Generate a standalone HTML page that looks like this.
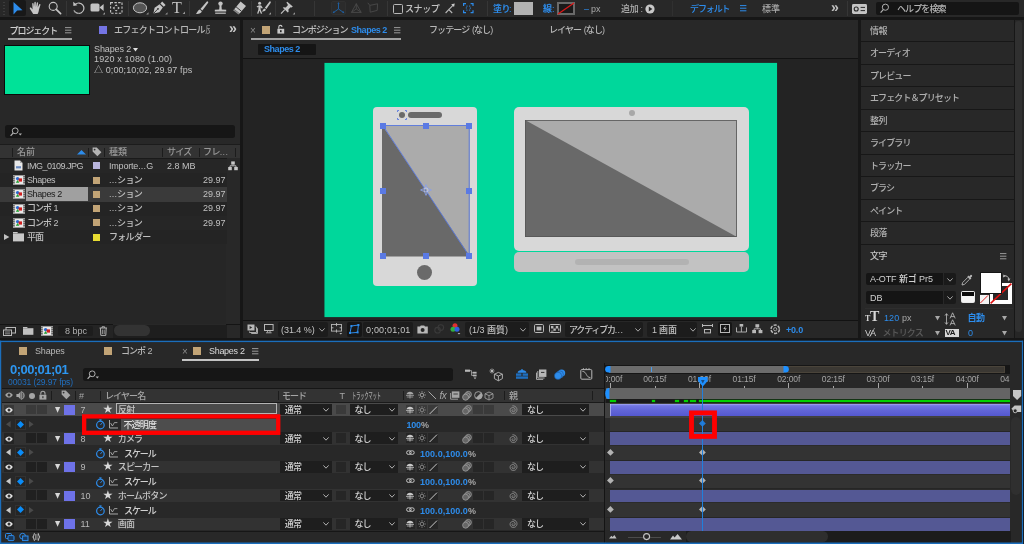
<!DOCTYPE html><html lang="ja"><head><meta charset="utf-8"><title>After Effects</title><style>
*{margin:0;padding:0;box-sizing:border-box}
html,body{width:1024px;height:544px;overflow:hidden;background:#161616}
body{position:relative;will-change:transform;font-family:"Liberation Sans","Noto Sans CJK JP",sans-serif;font-size:9px;font-weight:500;color:#b4b4b4;line-height:12px}
.a{position:absolute}
.t{position:absolute;white-space:nowrap;line-height:12px;height:12px}
.bl{color:#2d8ceb}
svg{position:absolute;overflow:visible}
</style></head><body>
<div class="a" style="left:0px;top:0px;width:1024px;height:17px;background:#282828;"></div>
<div class="a" style="left:3px;top:2px;width:2px;height:1px;background:#3c3c3c;"></div>
<div class="a" style="left:3px;top:5px;width:2px;height:1px;background:#3c3c3c;"></div>
<div class="a" style="left:3px;top:8px;width:2px;height:1px;background:#3c3c3c;"></div>
<div class="a" style="left:3px;top:11px;width:2px;height:1px;background:#3c3c3c;"></div>
<div class="a" style="left:3px;top:14px;width:2px;height:1px;background:#3c3c3c;"></div>
<div class="a" style="left:9px;top:0px;width:17px;height:16px;background:#181818;border-radius:2px;"></div>
<svg style="left:13px;top:2px" width="10" height="13" viewBox="0 0 10 13"><path d="M0.5 0 L9.5 8.2 L4.2 8.6 L0.5 12.5 Z" fill="#2d8ceb"/></svg>
<svg style="left:29px;top:1px" width="14" height="14" viewBox="0 0 14 14"><path d="M4.2 13 C3 11 1.5 9 0.8 7.6 C0.5 6.6 1.6 6.2 2.4 7 L3.6 8.4 L3.2 2.8 C3.2 1.8 4.5 1.8 4.6 2.8 L5 6 L5.4 1.4 C5.5 0.4 6.8 0.4 6.8 1.4 L6.9 6 L7.8 1.8 C8 0.9 9.2 1.1 9.1 2.1 L8.7 6.4 L10.2 3.4 C10.7 2.6 11.7 3.1 11.4 4 L10 8.6 C9.8 10.6 9.4 11.8 8.6 13 Z" fill="#c4c4c4"/></svg>
<svg style="left:48px;top:1px" width="14" height="14" viewBox="0 0 14 14"><circle cx="5.2" cy="5.4" r="4" fill="none" stroke="#c4c4c4" stroke-width="1.1"/><path d="M8.2 8.4 L12.6 12.6" stroke="#c4c4c4" stroke-width="1.7" stroke-linecap="round"/></svg>
<div class="a" style="left:66px;top:1px;width:1px;height:15px;background:#363636;"></div>
<svg style="left:72px;top:1px" width="14" height="14" viewBox="0 0 14 14"><path d="M3.2 3.4 A5.2 5.2 0 1 1 2 9.4" fill="none" stroke="#c4c4c4" stroke-width="1.2"/><path d="M1.2 0.8 L1.4 5 L5.4 4.2 Z" fill="#c4c4c4"/><path d="M2 9.4 A5.2 5.2 0 0 0 7 12.6" fill="none" stroke="#777" stroke-width="1" stroke-dasharray="1.2 1.2"/></svg>
<svg style="left:90px;top:2px" width="16" height="13" viewBox="0 0 16 13"><rect x="0.5" y="1.5" width="9" height="8" rx="1.6" fill="#c4c4c4"/><path d="M9.5 5.5 L13.6 2 L13.6 9 Z" fill="#c4c4c4"/><path d="M15 12.5 L15 10.2 L12.7 12.5 Z" fill="#999"/></svg>
<svg style="left:110px;top:2px" width="13" height="12" viewBox="0 0 13 12"><rect x="0.6" y="0.6" width="11.4" height="10.6" fill="none" stroke="#c4c4c4" stroke-width="1.1" stroke-dasharray="2.4 1.4"/><path d="M2.5 6 L4.6 4.4 L4.6 7.6 Z M9.9 6 L7.8 4.4 L7.8 7.6 Z M6.2 2.3 L4.8 4 L7.6 4 Z M6.2 9.6 L4.8 8 L7.6 8 Z" fill="#c4c4c4"/></svg>
<div class="a" style="left:128px;top:1px;width:1px;height:15px;background:#363636;"></div>
<svg style="left:133px;top:2px" width="16" height="13" viewBox="0 0 16 13"><ellipse cx="7" cy="5.8" rx="6.6" ry="5" fill="#555" stroke="#c4c4c4" stroke-width="1"/><path d="M15.5 12.5 L15.5 10.2 L13.2 12.5 Z" fill="#999"/></svg>
<svg style="left:152px;top:1px" width="16" height="14" viewBox="0 0 16 14"><path d="M1.4 12.6 L2.6 6.8 L7.6 3.2 L10.8 6.4 L7.4 11.2 Z" fill="#c4c4c4"/><path d="M8.4 2.4 L10.2 0.6 L13.6 4 L11.8 5.8 Z" fill="#c4c4c4"/><path d="M1.4 12.6 L5.6 8.2" stroke="#282828" stroke-width="0.9"/><circle cx="6" cy="7.8" r="0.9" fill="#282828"/><path d="M15.5 13.5 L15.5 11.2 L13.2 13.5 Z" fill="#999"/></svg>
<div class="t " style="left:172px;top:-1px;font-family:'Liberation Serif',serif;font-size:16px;line-height:17px;height:17px;color:#c4c4c4">T</div>
<svg style="left:182px;top:11px" width="3" height="3" viewBox="0 0 3 3"><path d="M3 3 L3 0.6 L0.6 3 Z" fill="#999"/></svg>
<div class="a" style="left:189px;top:1px;width:1px;height:15px;background:#363636;"></div>
<svg style="left:195px;top:1px" width="14" height="14" viewBox="0 0 14 14"><path d="M12.6 0.4 C13.4 0.6 13.4 1.4 13 2 L7.4 9.6 L5.4 8 L11.4 0.9 C11.8 0.5 12.2 0.3 12.6 0.4 Z" fill="#c4c4c4"/><path d="M4.8 8.6 L6.8 10.2 C6.4 12.2 3.6 13.2 0.8 12.8 C2.4 11.8 2.6 9.4 4.8 8.6 Z" fill="#c4c4c4"/></svg>
<svg style="left:214px;top:1px" width="14" height="14" viewBox="0 0 14 14"><circle cx="6.5" cy="2.6" r="2.2" fill="#c4c4c4"/><path d="M5.6 4 L7.4 4 L7.8 8.4 L12.2 8.8 L12.2 10.6 L0.8 10.6 L0.8 8.8 L5.2 8.4 Z" fill="#c4c4c4"/><rect x="1.2" y="11.6" width="10.6" height="1.2" fill="#c4c4c4"/></svg>
<svg style="left:232px;top:1px" width="15" height="14" viewBox="0 0 15 14"><path d="M8.6 0.6 L14 5 L7.6 12.6 L2.2 8.2 Z" fill="#c4c4c4"/><path d="M2.2 8.2 L7.6 12.6 L6.4 13.6 L1 9.2 Z" fill="#8a8a8a"/><path d="M4.1 5.9 L9.5 10.3" stroke="#282828" stroke-width="0.9"/></svg>
<div class="a" style="left:251px;top:1px;width:1px;height:15px;background:#363636;"></div>
<svg style="left:256px;top:1px" width="16" height="14" viewBox="0 0 16 14"><circle cx="3.6" cy="2.2" r="1.5" fill="#c4c4c4"/><path d="M0.6 5.6 L3 4.2 L5.2 4.6 L6.8 7 L5.8 7.6 L4.6 6.2 L4.6 8.6 L6.2 12.6 L4.9 12.8 L3.4 9.6 L2.4 12.8 L1.1 12.6 L2.4 8.4 L2.4 5.8 L1.2 6.6 Z" fill="#c4c4c4"/><path d="M14.4 0.4 C15 0.7 14.9 1.4 14.6 1.9 L10.4 8 L8.8 6.8 L13.4 0.8 C13.7 0.4 14.1 0.3 14.4 0.4 Z" fill="#c4c4c4"/><path d="M8.3 7.4 L9.9 8.6 C9.6 10.2 7.6 10.8 5.8 10.4 C7 9.8 7 8 8.3 7.4 Z" fill="#c4c4c4"/><path d="M15 13.5 L15 11.2 L12.7 13.5 Z" fill="#999"/></svg>
<div class="a" style="left:275px;top:1px;width:1px;height:15px;background:#363636;"></div>
<svg style="left:280px;top:1px" width="16" height="14" viewBox="0 0 16 14"><path d="M7.2 0.8 L12.8 5.6 L11.6 6.6 L10.6 6.2 L8.4 8.6 L8.6 10.8 L7.8 11.4 L2.8 6.8 L3.6 6.2 L5.8 6.4 L8 4 L6.4 1.6 Z" fill="#c4c4c4"/><path d="M4.8 8.6 L1 12.6" stroke="#c4c4c4" stroke-width="1.1"/><path d="M15 13.5 L15 11.2 L12.7 13.5 Z" fill="#999"/></svg>
<div class="a" style="left:314px;top:1px;width:1px;height:15px;background:#363636;"></div>
<div class="a" style="left:331px;top:1px;width:15px;height:14px;background:#2b2b2b;border:1px solid #303030;border-radius:2px;"></div>
<svg style="left:332px;top:2px" width="13" height="12" viewBox="0 0 13 12"><path d="M6.5 1.4 L6.5 7 L1.6 10.4 M6.5 7 L11.4 10.4" fill="none" stroke="#1f5e9e" stroke-width="1"/><path d="M6.5 0 L5.4 2 L7.6 2 Z M0.6 11.2 L2.8 10.8 L1.6 9 Z M12.4 11.2 L10.2 10.8 L11.4 9 Z" fill="#1f5e9e"/></svg>
<svg style="left:350px;top:2px" width="13" height="12" viewBox="0 0 13 12"><path d="M6.3 1.4 L6.3 7 L1.4 10.4 M6.3 7 L11.2 10.4 M6.3 1.8 L1.4 10.4 L11.2 10.4 Z" fill="none" stroke="#4a4a4a" stroke-width="0.9"/></svg>
<svg style="left:367px;top:2px" width="13" height="12" viewBox="0 0 13 12"><path d="M2.8 3.4 L10.6 1.8 L10.2 8.4 L3.2 10.2 Z M0.8 0.8 L2.8 3.4" fill="none" stroke="#4a4a4a" stroke-width="0.9"/></svg>
<div class="a" style="left:387px;top:1px;width:1px;height:15px;background:#363636;"></div>
<div class="a" style="left:393px;top:4px;width:10px;height:10px;background:transparent;border:1px solid #b8b8b8;border-radius:1.5px;"></div>
<div class="t " style="left:405px;top:3px;color:#c2c2c2;letter-spacing:-0.4px">スナップ</div>
<svg style="left:445px;top:3px" width="10" height="11" viewBox="0 0 10 11"><path d="M0.6 10 L3.8 6.6 L7.2 10 M3.8 6.6 L8.4 1.8" fill="none" stroke="#b8b8b8" stroke-width="1.1"/><path d="M9.8 0.4 L6.2 1.2 L9 4 Z" fill="#c8c8c8"/></svg>
<svg style="left:463px;top:3px" width="11" height="11" viewBox="0 0 11 11"><path d="M0.6 3 V0.6 H3 M7.6 0.6 H10 V3 M10 7.2 V9.6 H7.6 M3 9.6 H0.6 V7.2" fill="none" stroke="#2d8ceb" stroke-width="1.2"/><rect x="3.3" y="3.1" width="4" height="4" fill="none" stroke="#2d8ceb" stroke-width="0.9" stroke-dasharray="1.3 1.4"/></svg>
<div class="a" style="left:487px;top:1px;width:1px;height:15px;background:#363636;"></div>
<div class="t bl" style="left:493px;top:3px;letter-spacing:-0.5px;font-weight:bold">塗り</div>
<div class="t bl" style="left:509px;top:3px;">:</div>
<div class="a" style="left:514px;top:2px;width:19px;height:13px;background:#b2b2b2;"></div>
<div class="t bl" style="left:543px;top:3px;font-weight:bold">線</div>
<div class="t bl" style="left:552px;top:3px;">:</div>
<div class="a" style="left:557px;top:2px;width:18px;height:13px;background:#6a6a6a;"><div class="a" style="left:2px;top:2px;width:14px;height:9px;background:#1a1a1a"></div></div>
<svg style="left:557px;top:2px" width="18" height="13" viewBox="0 0 18 13"><path d="M1 12 L17 1" stroke="#e01818" stroke-width="1.2"/></svg>
<div class="t bl" style="left:584px;top:3px;">–</div>
<div class="t " style="left:591px;top:3px;color:#a8a8a8">px</div>
<div class="t " style="left:621px;top:3px;color:#b0b0b0;letter-spacing:-0.3px">追加 :</div>
<svg style="left:645px;top:4px" width="10" height="10" viewBox="0 0 10 10"><circle cx="5" cy="5" r="4.6" fill="#c8c8c8"/><path d="M3.8 2.6 L7.4 5 L3.8 7.4 Z" fill="#282828"/></svg>
<div class="a" style="left:672px;top:1px;width:1px;height:15px;background:#303030;"></div>
<div class="t bl" style="left:690px;top:3px;letter-spacing:-1.1px">デフォルト</div>
<svg style="left:740px;top:5px" width="7" height="7" viewBox="0 0 7 7"><path d="M0 0.6 H6.4 M0 3.2 H6.4 M0 5.8 H6.4" stroke="#2d8ceb" stroke-width="1"/></svg>
<div class="t " style="left:762px;top:3px;color:#a8a8a8">標準</div>
<div class="t " style="left:831px;top:0px;font-size:14px;color:#c0c0c0;line-height:14px;height:14px;font-weight:bold;letter-spacing:-1px">»</div>
<div class="a" style="left:847px;top:1px;width:1px;height:15px;background:#363636;"></div>
<svg style="left:852px;top:4px" width="15" height="10" viewBox="0 0 15 10"><rect x="0" y="0" width="15" height="10" rx="1.4" fill="#c4c4c4"/><circle cx="4.2" cy="5" r="2" fill="none" stroke="#282828" stroke-width="1.1"/><path d="M8.6 3.4 H13 M8.6 6.6 H13" stroke="#282828" stroke-width="1"/></svg>
<div class="a" style="left:876px;top:2px;width:143px;height:13px;background:#151515;border-radius:2px;"></div>
<svg style="left:880px;top:3px" width="10" height="11" viewBox="0 0 10 11"><circle cx="5.4" cy="4.2" r="3.1" fill="none" stroke="#b0b0b0" stroke-width="1"/><path d="M3.2 6.6 L0.6 9.6" stroke="#b0b0b0" stroke-width="1.2"/></svg>
<div class="t " style="left:897px;top:3px;color:#b4b4b4;letter-spacing:-0.9px">ヘルプを検索</div>
<div class="a" style="left:0px;top:20px;width:240px;height:317.7px;background:#282828;"></div>
<div class="t " style="left:9.5px;top:24.5px;color:#d0d0d0;font-weight:500;letter-spacing:-1.05px">プロジェクト</div>
<svg style="left:65px;top:27px" width="7" height="7" viewBox="0 0 7 7"><path d="M0 0.6 H6.4 M0 3.2 H6.4 M0 5.8 H6.4" stroke="#9a9a9a" stroke-width="1"/></svg>
<div class="a" style="left:8px;top:38px;width:64px;height:2px;background:#a2a2a2;"></div>
<div class="a" style="left:99px;top:26px;width:8px;height:8px;background:#7474e4;"></div>
<div class="t " style="left:114px;top:24px;color:#b8b8b8;letter-spacing:-0.75px">エフェクトコントロール</div>
<div class="t " style="left:205px;top:24px;color:#8a8a8a;width:5px;overflow:hidden">反</div>
<div class="t " style="left:229px;top:21px;font-size:14px;color:#c8c8c8;line-height:14px;height:14px;font-weight:bold;letter-spacing:-1px">»</div>
<div class="a" style="left:4px;top:45px;width:86px;height:50px;background:#0a0a0a;"></div>
<div class="a" style="left:5px;top:46px;width:84px;height:48px;background:#00e298;"></div>
<div class="t " style="left:94px;top:43px;color:#c0c0c0;letter-spacing:-0.1px">Shapes 2</div>
<svg style="left:133px;top:47.5px" width="5" height="4" viewBox="0 0 5 4"><path d="M0 0 H5 L2.5 3.6 Z" fill="#e0e0e0"/></svg>
<div class="t " style="left:94px;top:53px;color:#c0c0c0;letter-spacing:0.15px">1920 x 1080 (1.00)</div>
<div class="t " style="left:94px;top:64px;color:#c0c0c0;letter-spacing:0.1px">△ 0;00;10;02, 29.97 fps</div>
<div class="a" style="left:5px;top:125px;width:229.5px;height:13.2px;background:#161616;border-radius:2.5px;"></div>
<svg style="left:10px;top:127px" width="13" height="10" viewBox="0 0 13 10"><circle cx="5.2" cy="3.8" r="2.9" fill="none" stroke="#b0b0b0" stroke-width="1"/><path d="M3.2 6 L0.6 8.8" stroke="#b0b0b0" stroke-width="1.2"/><path d="M8.6 6.6 H12 L10.3 8.6 Z" fill="#b0b0b0"/></svg>
<div class="a" style="left:227px;top:159px;width:13px;height:165px;background:#282828;"></div>
<div class="a" style="left:0px;top:144px;width:240px;height:1px;background:#1c1c1c;"></div>
<div class="a" style="left:0px;top:145px;width:240px;height:13px;background:#333333;"></div>
<div class="a" style="left:0px;top:158px;width:227px;height:1px;background:#1a1a1a;"></div>
<div class="a" style="left:12px;top:147.5px;width:1px;height:9px;background:#1c1c1c;"></div>
<div class="a" style="left:88px;top:147.5px;width:1px;height:9px;background:#1c1c1c;"></div>
<div class="a" style="left:104px;top:147.5px;width:1px;height:9px;background:#1c1c1c;"></div>
<div class="a" style="left:162px;top:147.5px;width:1px;height:9px;background:#1c1c1c;"></div>
<div class="a" style="left:198.5px;top:147.5px;width:1px;height:9px;background:#1c1c1c;"></div>
<div class="a" style="left:235.4px;top:147.5px;width:1px;height:9px;background:#1c1c1c;"></div>
<div class="t " style="left:17px;top:145.6px;color:#989898">名前</div>
<svg style="left:77px;top:149.6px" width="9" height="5" viewBox="0 0 9 5"><path d="M0 4.6 L4.5 0 L9 4.6 Z" fill="#2d8ceb"/></svg>
<svg style="left:92px;top:147.3px" width="10" height="10" viewBox="0 0 10 10"><path d="M0.6 0.6 H4.8 L9.4 5.2 L5.4 9.2 L0.6 4.6 Z" fill="#b4b4b4"/><circle cx="2.6" cy="2.6" r="0.9" fill="#333333"/></svg>
<div class="t " style="left:109px;top:145.6px;color:#989898">種類</div>
<div class="t " style="left:167px;top:145.6px;color:#989898;letter-spacing:-0.8px">サイズ</div>
<div class="t " style="left:203px;top:145.6px;color:#989898;letter-spacing:-0.6px">フレ<span style="letter-spacing:0.3px">...</span></div>
<div class="a" style="left:0px;top:158.75px;width:227px;height:14.25px;background:#262626;"></div>
<svg style="left:14px;top:160.25px" width="9" height="11" viewBox="0 0 9 11"><path d="M0.5 0.5 H6 L8.5 3 V10.5 H0.5 Z" fill="#e8e8e8"/><path d="M6 0.5 V3 H8.5" fill="#aaa"/><rect x="2" y="6.2" width="5" height="2.2" fill="#6a8ac0"/></svg>
<div class="t " style="left:27px;top:160px;color:#c0c0c0;letter-spacing:-0.5px">IMG_0109.JPG</div>
<div class="a" style="left:93px;top:162.25px;width:7px;height:7px;background:#b8b4dc;"></div>
<div class="t " style="left:109px;top:160px;color:#c0c0c0;letter-spacing:-0.2px">Importe<span style="letter-spacing:0.2px">...</span>G</div>
<div class="t " style="left:167px;top:160px;color:#c0c0c0">2.8 MB</div>
<svg style="left:228px;top:160.75px" width="10" height="10" viewBox="0 0 10 10"><rect x="3.2" y="0.4" width="3.6" height="3.2" fill="#c8c8c8"/><rect x="0.2" y="6" width="3.6" height="3.2" fill="#c8c8c8"/><rect x="6.2" y="6" width="3.6" height="3.2" fill="#c8c8c8"/><path d="M5 3.6 V4.8 M2 6 V4.8 H8 V6" fill="none" stroke="#c8c8c8" stroke-width="0.9"/></svg>
<div class="a" style="left:0px;top:173.0px;width:227px;height:14.25px;background:#242424;"></div>
<svg style="left:13px;top:175.0px" width="12" height="10" viewBox="0 0 12 10"><rect x="0" y="0" width="12" height="10" fill="#9a9a9a"/><rect x="1.8" y="1" width="8.4" height="8" fill="#e8e8e8"/><circle cx="4.6" cy="3.6" r="1.7" fill="#2a6ad0"/><rect x="5.6" y="3.4" width="3.4" height="3.2" fill="#d02020"/><path d="M2.8 7.8 L4.6 5 L6.4 7.8 Z" fill="#20a030"/><path d="M0.9 1 V9 M11.1 1 V9" stroke="#333" stroke-width="0.9" stroke-dasharray="1 1"/></svg>
<div class="t " style="left:27px;top:174px;color:#c0c0c0;letter-spacing:-0.4px">Shapes</div>
<div class="a" style="left:93px;top:176.5px;width:7px;height:7px;background:#c2a476;"></div>
<div class="t " style="left:109px;top:174px;color:#c0c0c0;letter-spacing:-0.7px"><span style="letter-spacing:0.2px">...</span>ション</div>
<div class="t " style="left:203px;top:174px;color:#c0c0c0">29.97</div>
<div class="a" style="left:0px;top:187.25px;width:227px;height:14.25px;background:#3a3a3a;"></div>
<div class="a" style="left:25.5px;top:187.45px;width:62.5px;height:13.7px;background:#a0a0a0;"></div>
<svg style="left:13px;top:189.25px" width="12" height="10" viewBox="0 0 12 10"><rect x="0" y="0" width="12" height="10" fill="#9a9a9a"/><rect x="1.8" y="1" width="8.4" height="8" fill="#e8e8e8"/><circle cx="4.6" cy="3.6" r="1.7" fill="#2a6ad0"/><rect x="5.6" y="3.4" width="3.4" height="3.2" fill="#d02020"/><path d="M2.8 7.8 L4.6 5 L6.4 7.8 Z" fill="#20a030"/><path d="M0.9 1 V9 M11.1 1 V9" stroke="#333" stroke-width="0.9" stroke-dasharray="1 1"/></svg>
<div class="t " style="left:27px;top:188px;color:#1a1a1a;letter-spacing:-0.4px">Shapes 2</div>
<div class="a" style="left:93px;top:190.75px;width:7px;height:7px;background:#c2a476;"></div>
<div class="t " style="left:109px;top:188px;color:#c0c0c0;letter-spacing:-0.7px"><span style="letter-spacing:0.2px">...</span>ション</div>
<div class="t " style="left:203px;top:188px;color:#c0c0c0">29.97</div>
<div class="a" style="left:0px;top:201.5px;width:227px;height:14.25px;background:#242424;"></div>
<svg style="left:13px;top:203.5px" width="12" height="10" viewBox="0 0 12 10"><rect x="0" y="0" width="12" height="10" fill="#9a9a9a"/><rect x="1.8" y="1" width="8.4" height="8" fill="#e8e8e8"/><circle cx="4.6" cy="3.6" r="1.7" fill="#2a6ad0"/><rect x="5.6" y="3.4" width="3.4" height="3.2" fill="#d02020"/><path d="M2.8 7.8 L4.6 5 L6.4 7.8 Z" fill="#20a030"/><path d="M0.9 1 V9 M11.1 1 V9" stroke="#333" stroke-width="0.9" stroke-dasharray="1 1"/></svg>
<div class="t " style="left:27px;top:202px;color:#c0c0c0;letter-spacing:-1px;word-spacing:1px">コンポ 1</div>
<div class="a" style="left:93px;top:205.0px;width:7px;height:7px;background:#c2a476;"></div>
<div class="t " style="left:109px;top:202px;color:#c0c0c0;letter-spacing:-0.7px"><span style="letter-spacing:0.2px">...</span>ション</div>
<div class="t " style="left:203px;top:202px;color:#c0c0c0">29.97</div>
<div class="a" style="left:0px;top:215.75px;width:227px;height:14.25px;background:#262626;"></div>
<svg style="left:13px;top:217.75px" width="12" height="10" viewBox="0 0 12 10"><rect x="0" y="0" width="12" height="10" fill="#9a9a9a"/><rect x="1.8" y="1" width="8.4" height="8" fill="#e8e8e8"/><circle cx="4.6" cy="3.6" r="1.7" fill="#2a6ad0"/><rect x="5.6" y="3.4" width="3.4" height="3.2" fill="#d02020"/><path d="M2.8 7.8 L4.6 5 L6.4 7.8 Z" fill="#20a030"/><path d="M0.9 1 V9 M11.1 1 V9" stroke="#333" stroke-width="0.9" stroke-dasharray="1 1"/></svg>
<div class="t " style="left:27px;top:217px;color:#c0c0c0;letter-spacing:-1px;word-spacing:1px">コンポ 2</div>
<div class="a" style="left:93px;top:219.25px;width:7px;height:7px;background:#c2a476;"></div>
<div class="t " style="left:109px;top:217px;color:#c0c0c0;letter-spacing:-0.7px"><span style="letter-spacing:0.2px">...</span>ション</div>
<div class="t " style="left:203px;top:217px;color:#c0c0c0">29.97</div>
<div class="a" style="left:0px;top:230.0px;width:227px;height:14.25px;background:#242424;"></div>
<svg style="left:4px;top:234.0px" width="6" height="6" viewBox="0 0 6 6"><path d="M0 0 L5.4 3 L0 6 Z" fill="#c0c0c0"/></svg>
<svg style="left:13px;top:232.0px" width="11" height="10" viewBox="0 0 11 10"><path d="M0 1.2 H4.2 L5 0 H0 Z" fill="#c8c8c8"/><rect x="0" y="1.4" width="11" height="8" fill="#c8c8c8"/></svg>
<div class="t " style="left:27px;top:231px;color:#c0c0c0;letter-spacing:-1px;word-spacing:1px">平面</div>
<div class="a" style="left:93px;top:233.5px;width:7px;height:7px;background:#e8dc32;"></div>
<div class="t " style="left:109px;top:231px;color:#c0c0c0;letter-spacing:-0.7px">フォルダー</div>
<div class="a" style="left:0px;top:244.25px;width:226px;height:79.75px;background:#262626;"></div>
<div class="a" style="left:0px;top:324px;width:113px;height:1px;background:#141414;"></div>
<div class="a" style="left:226px;top:324px;width:14px;height:1px;background:#141414;"></div>
<div class="a" style="left:0px;top:325px;width:113px;height:12.7px;background:#242424;"></div>
<div class="a" style="left:113px;top:325px;width:114px;height:12.7px;background:#1e1e1e;"></div>
<svg style="left:3px;top:327px" width="13" height="9" viewBox="0 0 13 9"><rect x="3" y="0.5" width="9.5" height="5.5" fill="none" stroke="#b8b8b8" stroke-width="1"/><rect x="0.5" y="3" width="8" height="5.5" fill="#242424" stroke="#b8b8b8" stroke-width="1"/><path d="M2 5 H7 M2 6.8 H7" stroke="#b8b8b8" stroke-width="0.7"/></svg>
<svg style="left:23px;top:327px" width="11" height="8" viewBox="0 0 11 8"><path d="M0 1 H4 L4.8 0 H0 Z" fill="#c0c0c0"/><rect x="0" y="1.2" width="10.4" height="6.6" fill="#c0c0c0"/></svg>
<svg style="left:41px;top:326px" width="12" height="10" viewBox="0 0 12 10"><rect x="0" y="0" width="12" height="10" fill="#9a9a9a"/><rect x="1.8" y="1" width="8.4" height="8" fill="#e8e8e8"/><circle cx="4.6" cy="3.6" r="1.7" fill="#2a6ad0"/><rect x="5.6" y="3.4" width="3.4" height="3.2" fill="#d02020"/><path d="M2.8 7.8 L4.6 5 L6.4 7.8 Z" fill="#20a030"/><path d="M0.9 1 V9 M11.1 1 V9" stroke="#333" stroke-width="0.9" stroke-dasharray="1 1"/></svg>
<div class="a" style="left:58px;top:326px;width:35.2px;height:10px;background:#1d1d1d;border-radius:2px;"></div>
<div class="t " style="left:65px;top:325px;color:#b0b0b0">8 bpc</div>
<svg style="left:99px;top:326px" width="9" height="10" viewBox="0 0 9 10"><path d="M0.6 2 H8 M3 2 V0.8 H5.6 V2 M1.4 2 L1.8 9.4 H6.8 L7.2 2" fill="none" stroke="#b0b0b0" stroke-width="1"/><path d="M3.4 3.6 V8 M5.2 3.6 V8" stroke="#b0b0b0" stroke-width="0.8"/></svg>
<div class="a" style="left:114px;top:325.4px;width:36px;height:10.6px;background:#333333;border-radius:5.3px;"></div>
<div class="a" style="left:243px;top:20px;width:615px;height:317.7px;background:#232323;"></div>
<div class="a" style="left:243px;top:20px;width:615px;height:38px;background:#282828;"></div>
<div class="t " style="left:250px;top:25px;color:#8a8a8a;font-size:10px">×</div>
<div class="a" style="left:262px;top:26px;width:8px;height:8px;background:#c2a476;"></div>
<svg style="left:277px;top:25px" width="8" height="9" viewBox="0 0 8 9"><rect x="0.4" y="3.8" width="6.8" height="4.8" fill="#c8c8c8"/><path d="M1.8 3.8 V2 A1.6 1.6 0 0 1 5 2" fill="none" stroke="#c8c8c8" stroke-width="1.1"/><rect x="3" y="5.2" width="1.6" height="2" fill="#232323"/></svg>
<div class="t " style="left:292px;top:24px;color:#c0c0c0;letter-spacing:-1.1px">コンポジション</div>
<div class="t bl" style="left:351px;top:24px;font-weight:bold;letter-spacing:-0.45px">Shapes 2</div>
<svg style="left:394px;top:27px" width="7" height="7" viewBox="0 0 7 7"><path d="M0 0.6 H6.4 M0 3.2 H6.4 M0 5.8 H6.4" stroke="#9a9a9a" stroke-width="1"/></svg>
<div class="a" style="left:250.5px;top:38px;width:150.5px;height:2px;background:#a2a2a2;"></div>
<div class="t " style="left:429px;top:24px;color:#b8b8b8;letter-spacing:-0.9px;word-spacing:1px">フッテージ (なし)</div>
<div class="t " style="left:549px;top:24px;color:#b8b8b8;letter-spacing:-0.9px;word-spacing:1px">レイヤー (なし)</div>
<div class="a" style="left:258px;top:44px;width:58px;height:11px;background:#151515;border-radius:1px;"></div>
<div class="t bl" style="left:264px;top:43px;font-weight:bold;letter-spacing:-0.45px">Shapes 2</div>
<div class="a" style="left:243px;top:58px;width:615px;height:1px;background:#121212;"></div>
<svg style="left:324px;top:62px" width="454" height="256" viewBox="0 0 454 256"><rect x="0.45" y="0.9" width="452.6" height="254.2" fill="#00d79b"/></svg>
<div class="a" style="left:373px;top:107px;width:104px;height:179px;background:#d8d8d8;border-radius:4px;"></div>
<div class="a" style="left:408px;top:112px;width:34px;height:6px;background:#6a6a6a;border-radius:3px;"></div>
<div class="a" style="left:399px;top:112px;width:6px;height:6px;background:#6a6a6a;border-radius:3px;"></div>
<svg style="left:382px;top:125px" width="88" height="131.5" viewBox="0 0 88 131.5"><rect width="88" height="131.5" fill="#696969"/><path d="M0 0 H88 V131.5 Z" fill="#ababab"/><path d="M0.8 0.5 H87.2 V131 Z" fill="none" stroke="#5878e0" stroke-width="0.9"/></svg>
<div class="a" style="left:417.3px;top:264.8px;width:15px;height:15px;background:#6a6a6a;border-radius:8px;"></div>
<div class="a" style="left:380px;top:122.5px;width:6px;height:6px;background:#5a7ae4;"></div>
<div class="a" style="left:380px;top:187.5px;width:6px;height:6px;background:#5a7ae4;"></div>
<div class="a" style="left:380px;top:252.5px;width:6px;height:6px;background:#5a7ae4;"></div>
<div class="a" style="left:423px;top:122.5px;width:6px;height:6px;background:#5a7ae4;"></div>
<div class="a" style="left:423px;top:252.5px;width:6px;height:6px;background:#5a7ae4;"></div>
<div class="a" style="left:466px;top:122.5px;width:6px;height:6px;background:#5a7ae4;"></div>
<div class="a" style="left:466px;top:187.5px;width:6px;height:6px;background:#5a7ae4;"></div>
<div class="a" style="left:466px;top:252.5px;width:6px;height:6px;background:#5a7ae4;"></div>
<svg style="left:420.3px;top:184px" width="12" height="12" viewBox="0 0 12 12"><path d="M6 0.6 L7.6 4.4 L11.4 6 L7.6 7.6 L6 11.4 L4.4 7.6 L0.6 6 L4.4 4.4 Z" fill="none" stroke="#8aa0e8" stroke-width="0.9"/><circle cx="6" cy="6" r="2" fill="none" stroke="#c8d0f0" stroke-width="0.8"/></svg>
<svg style="left:397px;top:110px" width="10" height="10" viewBox="0 0 10 10"><path d="M0.5 0.5 L2 0.5 M0.5 0.5 V2 M9.5 0.5 H8 M9.5 0.5 V2 M0.5 9.5 H2 M0.5 9.5 V8 M9.5 9.5 H8 M9.5 9.5 V8" stroke="#5878e0" stroke-width="0.9"/></svg>
<div class="a" style="left:514px;top:107px;width:235px;height:144px;background:#d8d8d8;border-radius:5px;"></div>
<svg style="left:525px;top:120px" width="213" height="118" viewBox="0 0 213 118"><rect width="212" height="117" fill="#696969"/><path d="M0 0 H212 V117 Z" fill="#ababab"/><rect x="0.4" y="0.4" width="211.2" height="116.2" fill="none" stroke="#555" stroke-width="0.8"/></svg>
<div class="a" style="left:628.5px;top:110px;width:6px;height:6px;background:#a8a8a8;border-radius:3px;"></div>
<div class="a" style="left:513.5px;top:252px;width:235.3px;height:19.6px;background:#c2c2c2;border-radius:5px;"></div>
<div class="a" style="left:574.5px;top:259px;width:114px;height:6px;background:#b2b2b2;border-radius:3px;"></div>
<div class="a" style="left:243px;top:320px;width:615px;height:1px;background:#121212;"></div>
<div class="a" style="left:243px;top:321px;width:615px;height:16.7px;background:#272727;"></div>
<svg style="left:247px;top:324px" width="11" height="10" viewBox="0 0 11 10"><rect x="0.5" y="0.5" width="7" height="6" fill="#b8b8b8"/><path d="M2.6 2 L5.2 3.5 L2.6 5 Z" fill="#262626"/><path d="M2.5 7.5 V8.5 H9.5 V3 H8.5 M9.5 4.5 H10.5 V9.5 H4.5 V8.5" fill="none" stroke="#b8b8b8" stroke-width="0.9"/></svg>
<svg style="left:264px;top:324px" width="10" height="10" viewBox="0 0 10 10"><rect x="0.5" y="0.5" width="8.6" height="6" fill="none" stroke="#b8b8b8" stroke-width="1"/><path d="M3.6 6.5 V8.4 M6 6.5 V8.4 M2 8.8 H7.6" stroke="#b8b8b8" stroke-width="0.9"/></svg>
<div class="a" style="left:278px;top:322px;width:50px;height:15px;background:#1c1c1c;border-radius:2px;"></div>
<div class="t " style="left:281px;top:324px;color:#c4c4c4;letter-spacing:-0.05px">(31.4 %)</div>
<svg style="left:319px;top:328px" width="6" height="4" viewBox="0 0 6 4"><path d="M0.4 0.4 L3 3.2 L5.6 0.4" fill="none" stroke="#a8a8a8" stroke-width="1"/></svg>
<svg style="left:331px;top:323px" width="12" height="12" viewBox="0 0 12 12"><rect x="0.5" y="1.5" width="10" height="6.6" fill="none" stroke="#b8b8b8" stroke-width="0.9"/><path d="M5.5 0 V3.2 M5.5 6.4 V9.6 M0 4.8 H2.4 M8.6 4.8 H11" stroke="#b8b8b8" stroke-width="0.9"/><path d="M8.4 10 H11.2 L9.8 11.6 Z" fill="#b8b8b8"/></svg>
<div class="a" style="left:347px;top:322px;width:15px;height:15px;background:#161616;border-radius:2px;"></div>
<svg style="left:349px;top:324px" width="11" height="11" viewBox="0 0 11 11"><path d="M2.4 2 L9.4 1 L8.6 8.4 L1 9 Z" fill="none" stroke="#2d8ceb" stroke-width="1"/><rect x="1.4" y="1" width="2" height="2" fill="#2d8ceb"/><rect x="8.4" y="0" width="2" height="2" fill="#2d8ceb"/><rect x="7.6" y="7.4" width="2" height="2" fill="#2d8ceb"/><rect x="0" y="8" width="2" height="2" fill="#2d8ceb"/></svg>
<div class="a" style="left:363px;top:322px;width:50px;height:15px;background:#1c1c1c;border-radius:2px;"></div>
<div class="t " style="left:366px;top:324px;color:#c4c4c4;letter-spacing:0.2px">0;00;01;01</div>
<svg style="left:417px;top:325px" width="12" height="9" viewBox="0 0 12 9"><path d="M0.4 1.6 H3 L3.8 0.4 H7.2 L8 1.6 H10.8 V8.4 H0.4 Z" fill="#b8b8b8"/><circle cx="5.6" cy="4.9" r="2" fill="#262626"/></svg>
<svg style="left:434px;top:324px" width="11" height="10" viewBox="0 0 11 10"><circle cx="3.6" cy="6.2" r="2.8" fill="none" stroke="#3a3a3a" stroke-width="1.1"/><circle cx="6.8" cy="3.6" r="2.8" fill="none" stroke="#3a3a3a" stroke-width="1.1"/></svg>
<svg style="left:450px;top:323px" width="11" height="12" viewBox="0 0 11 12"><circle cx="5" cy="2.8" r="2.5" fill="#e03030"/><circle cx="3" cy="6.2" r="2.5" fill="#30b040"/><circle cx="7" cy="6.2" r="2.5" fill="#3060e0"/><path d="M7.6 10 H10.4 L9 11.6 Z" fill="#b8b8b8"/></svg>
<div class="a" style="left:465px;top:322px;width:64px;height:15px;background:#1c1c1c;border-radius:2px;"></div>
<div class="t " style="left:469px;top:324px;color:#c4c4c4;letter-spacing:0px">(1/3 画質)</div>
<svg style="left:520px;top:328px" width="6" height="4" viewBox="0 0 6 4"><path d="M0.4 0.4 L3 3.2 L5.6 0.4" fill="none" stroke="#a8a8a8" stroke-width="1"/></svg>
<svg style="left:534px;top:324px" width="10" height="10" viewBox="0 0 10 10"><rect x="0.5" y="0.5" width="9" height="8" rx="1.2" fill="none" stroke="#b8b8b8" stroke-width="1"/><rect x="2.6" y="2.6" width="4.8" height="3.8" fill="#b8b8b8"/></svg>
<svg style="left:549px;top:324px" width="12" height="10" viewBox="0 0 12 10"><rect x="0.5" y="0.5" width="11" height="8" rx="1" fill="none" stroke="#b8b8b8" stroke-width="1"/><path d="M2 2 H4.4 V4.4 H2 Z M6.8 2 H9.2 V4.4 H6.8 Z M4.4 4.4 H6.8 V6.8 H4.4 Z M9.2 4.4 H10.4 V6.8 H9.2 Z M2 6.8 H4.4 V7.6 H2 Z" fill="#b8b8b8"/></svg>
<div class="a" style="left:565px;top:322px;width:78px;height:15px;background:#1c1c1c;border-radius:2px;"></div>
<div class="t " style="left:569px;top:324px;color:#c4c4c4;letter-spacing:-1.2px">アクティブカ<span style="letter-spacing:0.3px">...</span></div>
<svg style="left:634.5px;top:328px" width="6" height="4" viewBox="0 0 6 4"><path d="M0.4 0.4 L3 3.2 L5.6 0.4" fill="none" stroke="#a8a8a8" stroke-width="1"/></svg>
<div class="a" style="left:647px;top:322px;width:50px;height:15px;background:#1c1c1c;border-radius:2px;"></div>
<div class="t " style="left:652px;top:324px;color:#c4c4c4;letter-spacing:-0.2px">1 画面</div>
<svg style="left:689.5px;top:328px" width="6" height="4" viewBox="0 0 6 4"><path d="M0.4 0.4 L3 3.2 L5.6 0.4" fill="none" stroke="#a8a8a8" stroke-width="1"/></svg>
<svg style="left:702px;top:324px" width="12" height="10" viewBox="0 0 12 10"><path d="M0.5 0 V3 M10.5 0 V3 M0.5 1.5 H10.5" stroke="#b8b8b8" stroke-width="1" fill="none"/><rect x="2.5" y="5.5" width="6" height="3.4" fill="none" stroke="#b8b8b8" stroke-width="1"/></svg>
<div class="a" style="left:718px;top:322px;width:14px;height:14px;background:#161616;border-radius:2px;"></div>
<svg style="left:720px;top:324px" width="10" height="10" viewBox="0 0 10 10"><rect x="0.5" y="0.5" width="9" height="8" fill="none" stroke="#b8b8b8" stroke-width="1"/><path d="M5.8 1.6 L3.2 5 H5 L4.2 7.6 L6.8 4.2 H5 Z" fill="#b8b8b8"/></svg>
<svg style="left:736px;top:324px" width="12" height="10" viewBox="0 0 12 10"><rect x="3.6" y="0" width="3.6" height="2.6" fill="#b8b8b8"/><path d="M0.5 3.4 V8 H10.5 V3.4 M5.4 2.6 V8" fill="none" stroke="#b8b8b8" stroke-width="0.9"/></svg>
<svg style="left:752px;top:324px" width="11" height="10" viewBox="0 0 11 10"><rect x="3.4" y="0.2" width="3.8" height="3.2" fill="#b8b8b8"/><rect x="0.2" y="6" width="3.8" height="3.2" fill="#b8b8b8"/><rect x="6.6" y="6" width="3.8" height="3.2" fill="#b8b8b8"/><path d="M5.3 3.4 V4.8 M2.1 6 V4.8 H8.5 V6" fill="none" stroke="#b8b8b8" stroke-width="0.9"/></svg>
<svg style="left:770px;top:324px" width="11" height="11" viewBox="0 0 11 11"><circle cx="5.2" cy="5.2" r="4.2" fill="none" stroke="#b8b8b8" stroke-width="1.5" stroke-dasharray="3.2 1.2"/><circle cx="5.2" cy="5.2" r="1.6" fill="none" stroke="#b8b8b8" stroke-width="0.8"/></svg>
<div class="t bl" style="left:786px;top:324px;font-weight:bold;letter-spacing:-0.2px">+0.0</div>
<div class="a" style="left:858px;top:20px;width:166px;height:317.7px;background:#171717;"></div>
<div class="a" style="left:861.3px;top:19.8px;width:153.2px;height:21.4px;background:#282828;"></div>
<div class="t " style="left:870px;top:25px;color:#b0b0b0;font-weight:500;letter-spacing:-0.5px">情報</div>
<div class="a" style="left:861.3px;top:42.3px;width:153.2px;height:21.4px;background:#282828;"></div>
<div class="t " style="left:870px;top:47px;color:#b0b0b0;font-weight:500;letter-spacing:-0.9px">オーディオ</div>
<div class="a" style="left:861.3px;top:64.8px;width:153.2px;height:21.4px;background:#282828;"></div>
<div class="t " style="left:870px;top:70px;color:#b0b0b0;font-weight:500;letter-spacing:-0.9px">プレビュー</div>
<div class="a" style="left:861.3px;top:87.3px;width:153.2px;height:21.4px;background:#282828;"></div>
<div class="t " style="left:870px;top:92px;color:#b0b0b0;font-weight:500;letter-spacing:-0.9px">エフェクト＆プリセット</div>
<div class="a" style="left:861.3px;top:109.8px;width:153.2px;height:21.4px;background:#282828;"></div>
<div class="t " style="left:870px;top:115px;color:#b0b0b0;font-weight:500;letter-spacing:-0.5px">整列</div>
<div class="a" style="left:861.3px;top:132.3px;width:153.2px;height:21.4px;background:#282828;"></div>
<div class="t " style="left:870px;top:137px;color:#b0b0b0;font-weight:500;letter-spacing:-0.9px">ライブラリ</div>
<div class="a" style="left:861.3px;top:154.8px;width:153.2px;height:21.4px;background:#282828;"></div>
<div class="t " style="left:870px;top:160px;color:#b0b0b0;font-weight:500;letter-spacing:-0.9px">トラッカー</div>
<div class="a" style="left:861.3px;top:177.3px;width:153.2px;height:21.4px;background:#282828;"></div>
<div class="t " style="left:870px;top:182px;color:#b0b0b0;font-weight:500;letter-spacing:-0.9px">ブラシ</div>
<div class="a" style="left:861.3px;top:199.8px;width:153.2px;height:21.4px;background:#282828;"></div>
<div class="t " style="left:870px;top:205px;color:#b0b0b0;font-weight:500;letter-spacing:-0.9px">ペイント</div>
<div class="a" style="left:861.3px;top:222.3px;width:153.2px;height:21.4px;background:#282828;"></div>
<div class="t " style="left:870px;top:227px;color:#b0b0b0;font-weight:500;letter-spacing:-0.5px">段落</div>
<div class="a" style="left:861.3px;top:244.8px;width:153.2px;height:92.9px;background:#282828;"></div>
<div class="t " style="left:870px;top:249.5px;color:#c4c4c4;font-weight:500;letter-spacing:-0.5px">文字</div>
<svg style="left:999.5px;top:253px" width="7" height="7" viewBox="0 0 7 7"><path d="M0 0.6 H6.4 M0 3.2 H6.4 M0 5.8 H6.4" stroke="#9a9a9a" stroke-width="1"/></svg>
<div class="a" style="left:1014.5px;top:20px;width:9.5px;height:317.7px;background:#262626;"></div>
<div class="a" style="left:1015.2px;top:20.5px;width:7.3px;height:311px;background:#303030;border-radius:3.6px;"></div>
<div class="a" style="left:865.5px;top:273px;width:77.5px;height:12px;background:#151515;border-radius:2px 0 0 2px;"></div>
<div class="a" style="left:944px;top:273px;width:12px;height:12px;background:#1a1a1a;border-radius:0 2px 2px 0;"></div>
<div class="t " style="left:870px;top:273px;color:#d0d0d0;letter-spacing:-0.1px">A-OTF 新ゴ Pr5</div>
<svg style="left:947px;top:277.5px" width="6" height="4" viewBox="0 0 6 4"><path d="M0.4 0.4 L3 3.2 L5.6 0.4" fill="none" stroke="#a8a8a8" stroke-width="1"/></svg>
<div class="a" style="left:865.5px;top:291px;width:77.5px;height:12.5px;background:#151515;border-radius:2px 0 0 2px;"></div>
<div class="a" style="left:944px;top:291px;width:12px;height:12.5px;background:#1a1a1a;border-radius:0 2px 2px 0;"></div>
<div class="t " style="left:870px;top:291.5px;color:#d0d0d0">DB</div>
<svg style="left:947px;top:295.5px" width="6" height="4" viewBox="0 0 6 4"><path d="M0.4 0.4 L3 3.2 L5.6 0.4" fill="none" stroke="#a8a8a8" stroke-width="1"/></svg>
<svg style="left:961px;top:274px" width="12" height="12" viewBox="0 0 12 12"><path d="M1 11 L1.6 8.6 L7 3.2 L8.8 5 L3.4 10.4 Z" fill="none" stroke="#b8b8b8" stroke-width="0.9"/><path d="M6.4 2.6 L7.4 1.6 L8.2 2.4 L9.6 1 C10.4 0.4 11.6 1.6 11 2.4 L9.6 3.8 L10.4 4.6 L9.4 5.6 Z" fill="#b8b8b8"/></svg>
<div class="a" style="left:989.5px;top:282.5px;width:22px;height:21px;background:#fff;"></div>
<div class="a" style="left:993px;top:286px;width:15px;height:14px;background:#282828;"></div>
<svg style="left:989.5px;top:282.5px" width="22" height="21" viewBox="0 0 22 21"><path d="M0.6 20.4 L21.4 0.6" stroke="#e01010" stroke-width="1.5"/></svg>
<div class="a" style="left:979.5px;top:272px;width:22px;height:22px;background:#ffffff;border:0.5px solid #161616;"></div>
<svg style="left:1003px;top:274px" width="8" height="8" viewBox="0 0 8 8"><path d="M1 2 A3.6 3.6 0 0 1 5.8 5.6" fill="none" stroke="#b8b8b8" stroke-width="1"/><path d="M0 3.4 L0.4 0.6 L2.8 2 Z M7.4 4.4 L5.8 7.4 L4.4 4.8 Z" fill="#b8b8b8"/></svg>
<div class="a" style="left:960.5px;top:291px;width:14.5px;height:12.4px;background:#f4f4f4;border:1px solid #e8e8e8;border-radius:1.5px;"><div class="a" style="left:0;top:0;width:12.5px;height:4.4px;background:#0a0a0a"></div></div>
<div class="a" style="left:980px;top:295px;width:8.5px;height:8.5px;background:#f4f4f4;"></div>
<svg style="left:980px;top:295px" width="8.5" height="8.5" viewBox="0 0 8.5 8.5"><path d="M0.4 8 L8 0.4" stroke="#e01010" stroke-width="0.9"/></svg>
<div class="a" style="left:865px;top:308px;width:148px;height:1px;background:#2e2e2e;"></div>
<div class="t " style="left:865px;top:313px;color:#d8d8d8;font-family:'Liberation Serif',serif;font-size:8px;font-weight:bold;line-height:12px;height:12px">T</div>
<div class="t " style="left:870px;top:309px;color:#d8d8d8;font-family:'Liberation Serif',serif;font-size:14px;font-weight:bold;line-height:16px;height:16px">T</div>
<div class="t bl" style="left:884px;top:312px;letter-spacing:0.1px">120</div>
<div class="t " style="left:902px;top:312px;color:#a8a8a8">px</div>
<svg style="left:934.5px;top:316.2px" width="5" height="5" viewBox="0 0 5 5"><path d="M0 0 H5 L2.5 4.4 Z" fill="#a8a8a8"/></svg>
<svg style="left:945px;top:312px" width="12" height="14" viewBox="0 0 12 14"><path d="M1.5 2 V12 M0 3.6 L1.5 1.6 L3 3.6 M0 10.4 L1.5 12.4 L3 10.4" fill="none" stroke="#c0c0c0" stroke-width="0.8"/><path d="M5 6.4 L7.6 0.8 L10.2 6.4 M5.8 4.6 H9.4 M5 13.4 L7.6 7.8 L10.2 13.4 M5.8 11.6 H9.4" fill="none" stroke="#c0c0c0" stroke-width="0.8"/></svg>
<div class="t bl" style="left:967.5px;top:312px;font-weight:bold;letter-spacing:-0.6px">自動</div>
<svg style="left:1002px;top:316.2px" width="5" height="5" viewBox="0 0 5 5"><path d="M0 0 H5 L2.5 4.4 Z" fill="#a8a8a8"/></svg>
<div class="t " style="left:865px;top:327px;color:#d0d0d0;font-size:9px">V</div>
<div class="t " style="left:870px;top:327px;color:#d0d0d0;font-size:9px">A</div>
<svg style="left:866px;top:328px" width="11" height="9" viewBox="0 0 11 9"><path d="M8.6 0 L3.6 9" stroke="#d0d0d0" stroke-width="0.6"/></svg>
<div class="t " style="left:882.5px;top:327px;color:#5a5a5a;letter-spacing:-0.9px">メトリクス</div>
<svg style="left:934.5px;top:331px" width="5" height="5" viewBox="0 0 5 5"><path d="M0 0 H5 L2.5 4.4 Z" fill="#a8a8a8"/></svg>
<div class="a" style="left:945px;top:329px;width:13.5px;height:8px;background:#d8d8d8;"></div>
<div class="t " style="left:945.5px;top:327px;color:#1a1a1a;font-size:8px;font-weight:bold;letter-spacing:-0.6px">VA</div>
<div class="t bl" style="left:968px;top:327px;">0</div>
<svg style="left:1002px;top:331px" width="5" height="5" viewBox="0 0 5 5"><path d="M0 0 H5 L2.5 4.4 Z" fill="#a8a8a8"/></svg>
<div class="a" style="left:0px;top:341px;width:1024px;height:203px;background:#282828;"></div>
<div class="a" style="left:19px;top:347px;width:8px;height:8px;background:#c2a476;"></div>
<div class="t " style="left:35px;top:345px;color:#b8b8b8;letter-spacing:-0.15px">Shapes</div>
<div class="a" style="left:104px;top:347px;width:8px;height:8px;background:#c2a476;"></div>
<div class="t " style="left:121px;top:345px;color:#b8b8b8;letter-spacing:-1px;word-spacing:1px">コンポ 2</div>
<div class="t " style="left:182px;top:346px;color:#8a8a8a;font-size:10px">×</div>
<div class="a" style="left:193px;top:347px;width:8px;height:8px;background:#c2a476;"></div>
<div class="t " style="left:209px;top:345px;color:#dcdcdc;letter-spacing:-0.3px">Shapes 2</div>
<svg style="left:252px;top:348px" width="7" height="7" viewBox="0 0 7 7"><path d="M0 0.6 H6.4 M0 3.2 H6.4 M0 5.8 H6.4" stroke="#9a9a9a" stroke-width="1"/></svg>
<div class="a" style="left:182px;top:359px;width:77px;height:2px;background:#c4c4c4;"></div>
<div class="t " style="left:10px;top:362px;font-size:13px;font-weight:bold;line-height:16px;height:16px;letter-spacing:-0.55px;color:#2d96f0">0;00;01;01</div>
<div class="t " style="left:8px;top:375.5px;font-size:8.5px;letter-spacing:-0.1px;color:#1f6fc0">00031 (29.97 fps)</div>
<div class="a" style="left:82.5px;top:368px;width:370.5px;height:13px;background:#161616;border-radius:2.5px;"></div>
<svg style="left:87px;top:370px" width="13" height="10" viewBox="0 0 13 10"><circle cx="5.2" cy="3.8" r="2.9" fill="none" stroke="#b0b0b0" stroke-width="1"/><path d="M3.2 6 L0.6 8.8" stroke="#b0b0b0" stroke-width="1.2"/><path d="M8.6 6.6 H12 L10.3 8.6 Z" fill="#b0b0b0"/></svg>
<svg style="left:465px;top:369px" width="12" height="11" viewBox="0 0 12 11"><rect x="0" y="0.6" width="5" height="2.2" fill="#b8b8b8"/><path d="M5 1.7 H6.6 V6.4 H8 M6.6 3.8 H8" fill="none" stroke="#b8b8b8" stroke-width="0.8"/><rect x="8" y="2.8" width="3.6" height="1.8" fill="#b8b8b8"/><rect x="8" y="5.6" width="3.6" height="1.8" fill="#b8b8b8"/><path d="M8.6 8.6 H11.4 L10 10.2 Z" fill="#b8b8b8"/></svg>
<svg style="left:489px;top:367.5px" width="14" height="14" viewBox="0 0 14 14"><path d="M5.4 6.2 L9.4 4.4 L13.4 6.2 V10.6 L9.4 12.8 L5.4 10.6 Z M5.4 6.2 L9.4 8 L13.4 6.2 M9.4 8 V12.8" fill="none" stroke="#b8b8b8" stroke-width="0.9"/><path d="M3 0.4 V5.6 M0.4 3 H5.6 M1.2 1.2 L4.8 4.8 M4.8 1.2 L1.2 4.8" stroke="#b8b8b8" stroke-width="0.7"/><circle cx="3" cy="3" r="1.2" fill="#b8b8b8"/></svg>
<svg style="left:516px;top:369px" width="12" height="10" viewBox="0 0 12 10"><path d="M1.6 3.8 C1.6 0 10.4 0 10.4 3.8 Z" fill="#2d8ceb"/><circle cx="6" cy="0.8" r="0.8" fill="#2d8ceb"/><rect x="0" y="4.4" width="5.4" height="2.4" fill="#1f6fc0"/><rect x="6.6" y="4.4" width="5.4" height="2.4" fill="#1f6fc0"/><rect x="0" y="7.4" width="12" height="2.4" fill="#1f6fc0"/></svg>
<svg style="left:536px;top:369px" width="11" height="11" viewBox="0 0 11 11"><rect x="3" y="0.5" width="7.4" height="7.4" fill="#b8b8b8"/><path d="M1.8 2 V9 H8.6 M0.5 3.6 V10.4 H7.2" fill="none" stroke="#b8b8b8" stroke-width="0.9"/><path d="M5 3.4 H8.4" stroke="#232323" stroke-width="0.9"/></svg>
<svg style="left:554px;top:369px" width="12" height="11" viewBox="0 0 12 11"><circle cx="7.6" cy="4" r="3.6" fill="#2d8ceb"/><circle cx="5.8" cy="5.4" r="3.6" fill="#2d8ceb" stroke="#1a4f8a" stroke-width="0.5"/><circle cx="4" cy="6.8" r="3.6" fill="#2d8ceb" stroke="#1a4f8a" stroke-width="0.5"/></svg>
<svg style="left:580px;top:368px" width="13" height="12" viewBox="0 0 13 12"><rect x="0.8" y="1.6" width="11" height="9.6" rx="1" fill="none" stroke="#b8b8b8" stroke-width="1"/><path d="M2.4 3.4 C7 3.4 5.6 9.4 10.4 9.6" fill="none" stroke="#b8b8b8" stroke-width="0.9"/><path d="M3.4 0 V1.4 M6.2 0 V1.4 M9 0 V1.4" stroke="#b8b8b8" stroke-width="0.8"/></svg>
<div class="a" style="left:2px;top:388px;width:602px;height:1px;background:#161616;"></div>
<div class="a" style="left:2px;top:389px;width:602px;height:13px;background:#333333;"></div>
<div class="a" style="left:2px;top:402px;width:602px;height:1.3px;background:#1a1a1a;"></div>
<svg style="left:5px;top:392px" width="8" height="6" viewBox="0 0 8 6"><path d="M0.2 3 C2 -0.4 6 -0.4 7.8 3 C6 6.4 2 6.4 0.2 3 Z" fill="#a6a6a6"/><circle cx="4" cy="3" r="1.5" fill="#333333"/></svg>
<svg style="left:16px;top:391px" width="9" height="9" viewBox="0 0 9 9"><path d="M0.4 3 H2.4 L4.4 0.8 V8.2 L2.4 6 H0.4 Z" fill="#a6a6a6"/><path d="M5.2 0.6 A4 4 0 0 1 5.2 8.4 Z" fill="none" stroke="#a6a6a6" stroke-width="0.9"/><path d="M6 2 V7 M7.4 3 V6" stroke="#a6a6a6" stroke-width="0.6"/></svg>
<div class="a" style="left:28.5px;top:392.5px;width:6px;height:6px;background:#a6a6a6;border-radius:3px;"></div>
<svg style="left:39px;top:391px" width="8" height="9" viewBox="0 0 8 9"><rect x="0.4" y="3.8" width="7" height="4.8" fill="#a6a6a6"/><path d="M1.8 3.8 V2.4 A2.1 2.1 0 0 1 6 2.4 V3.8" fill="none" stroke="#a6a6a6" stroke-width="1.1"/><rect x="3.3" y="5.2" width="1.2" height="2" fill="#333333"/></svg>
<div class="a" style="left:51px;top:391px;width:1px;height:9px;background:#1c1c1c;"></div>
<div class="a" style="left:75px;top:391px;width:1px;height:9px;background:#1c1c1c;"></div>
<div class="a" style="left:100px;top:391px;width:1px;height:9px;background:#1c1c1c;"></div>
<div class="a" style="left:277.5px;top:391px;width:1px;height:9px;background:#1c1c1c;"></div>
<div class="a" style="left:402.5px;top:391px;width:1px;height:9px;background:#1c1c1c;"></div>
<div class="a" style="left:504px;top:391px;width:1px;height:9px;background:#1c1c1c;"></div>
<div class="a" style="left:592px;top:391px;width:1px;height:9px;background:#1c1c1c;"></div>
<svg style="left:61px;top:390px" width="10" height="10" viewBox="0 0 10 10"><path d="M0.6 0.6 H4.8 L9.4 5.2 L5.4 9.2 L0.6 4.6 Z" fill="#a6a6a6"/><circle cx="2.6" cy="2.6" r="0.9" fill="#333333"/></svg>
<div class="t " style="left:79px;top:389.5px;color:#a6a6a6">#</div>
<div class="t " style="left:105px;top:389.5px;color:#a6a6a6;letter-spacing:-0.9px">レイヤー名</div>
<div class="t " style="left:282px;top:389.5px;color:#a6a6a6;letter-spacing:-1px">モード</div>
<div class="t " style="left:339.5px;top:389.5px;color:#a6a6a6">T</div>
<div class="t " style="left:351.5px;top:389.5px;color:#a6a6a6;letter-spacing:0;transform:scaleX(0.46);transform-origin:0 0">トラックマット</div>
<svg style="left:406px;top:391px" width="8" height="8" viewBox="0 0 8 8"><path d="M0.6 3.2 C0.6 -0.2 7.4 -0.2 7.4 3.2 Z" fill="#a6a6a6"/><path d="M0 4.4 H8 M0.8 6 H7.2 M4 3 V7.6" stroke="#a6a6a6" stroke-width="0.8"/></svg>
<svg style="left:417.5px;top:391px" width="8" height="8" viewBox="0 0 8 8"><circle cx="4" cy="4" r="1.7" fill="none" stroke="#a6a6a6" stroke-width="0.8"/><path d="M4 0 V1.8 M4 6.2 V8 M0 4 H1.8 M6.2 4 H8 M1.2 1.2 L2.4 2.4 M5.6 5.6 L6.8 6.8 M6.8 1.2 L5.6 2.4 M2.4 5.6 L1.2 6.8" stroke="#a6a6a6" stroke-width="0.7"/></svg>
<svg style="left:428px;top:391px" width="9" height="9" viewBox="0 0 9 9"><path d="M0.6 0.6 L8 8" stroke="#a6a6a6" stroke-width="1"/></svg>
<div class="t " style="left:439.5px;top:390px;color:#a6a6a6;font-style:italic;font-size:10px;letter-spacing:-0.5px">fx</div>
<svg style="left:450px;top:391px" width="10" height="9" viewBox="0 0 10 9"><rect x="1.8" y="0.4" width="7.6" height="6.4" fill="#a6a6a6"/><path d="M0.6 2 V8.2 H8" fill="none" stroke="#a6a6a6" stroke-width="0.9"/><path d="M3.4 3 H7.8" stroke="#333333" stroke-width="0.9"/></svg>
<svg style="left:461.5px;top:390.5px" width="10" height="10" viewBox="0 0 10 10"><circle cx="6.4" cy="3.4" r="3" fill="#555" stroke="#a6a6a6" stroke-width="0.8"/><circle cx="5" cy="4.8" r="3" fill="#555" stroke="#a6a6a6" stroke-width="0.8"/><circle cx="3.6" cy="6.2" r="3" fill="#666" stroke="#a6a6a6" stroke-width="0.8"/></svg>
<svg style="left:473.5px;top:391px" width="9" height="9" viewBox="0 0 9 9"><circle cx="4.4" cy="4.4" r="3.8" fill="none" stroke="#a6a6a6" stroke-width="0.9"/><path d="M4.4 0.6 A3.8 3.8 0 0 1 4.4 8.2 Z" fill="#a6a6a6" transform="rotate(45 4.4 4.4)"/></svg>
<svg style="left:484px;top:390.5px" width="10" height="10" viewBox="0 0 10 10"><path d="M1 2.8 L5 1 L9 2.8 V7 L5 9 L1 7 Z M1 2.8 L5 4.6 L9 2.8 M5 4.6 V9" fill="none" stroke="#a6a6a6" stroke-width="0.8"/></svg>
<div class="t " style="left:509px;top:389.5px;color:#a6a6a6">親</div>
<div class="a" style="left:2px;top:403.3px;width:601.5px;height:12.9px;background:#4a4a4a;"></div>
<div class="a" style="left:4px;top:404.5px;width:9.5px;height:10.6px;background:#383838;"></div>
<svg style="left:4.8px;top:406.90000000000003px" width="8" height="6" viewBox="0 0 8 6"><path d="M0.2 3 C2 -0.4 6 -0.4 7.8 3 C6 6.4 2 6.4 0.2 3 Z" fill="#e4e4e4"/><circle cx="4" cy="3" r="1.5" fill="#333"/></svg>
<div class="a" style="left:26.2px;top:404.5px;width:9.8px;height:9.9px;background:#3a3a3a;"></div>
<div class="a" style="left:37.4px;top:404.5px;width:9.8px;height:9.9px;background:#3a3a3a;"></div>
<svg style="left:55.2px;top:406.90000000000003px" width="5.2" height="5.8" viewBox="0 0 5.2 5.8"><path d="M0 0 H5.2 L2.6 5.8 Z" fill="#d8d8d8"/></svg>
<div class="a" style="left:64.2px;top:404.7px;width:11px;height:10.4px;background:#6e72e8;"></div>
<div class="t " style="left:80.5px;top:404px;color:#b8b8b8">7</div>
<div class="t " style="left:102.5px;top:403px;color:#d8d8d8;font-size:12px;font-family:'DejaVu Sans',sans-serif">★</div>
<div class="a" style="left:116px;top:403.3px;width:161px;height:11.2px;background:#4a4a4a;border:1px solid #b4b4b4;"></div>
<div class="t " style="left:118px;top:404px;color:#c4c4c4;letter-spacing:-0.8px">反射</div>
<div class="a" style="left:280.4px;top:403.7px;width:51.6px;height:11.8px;background:#1e1e1e;"></div>
<div class="t " style="left:284.7px;top:404px;color:#d0d0d0;letter-spacing:-0.7px">通常</div>
<svg style="left:323px;top:407.90000000000003px" width="6" height="4" viewBox="0 0 6 4"><path d="M0.4 0.4 L3 3.2 L5.6 0.4" fill="none" stroke="#b0b0b0" stroke-width="1"/></svg>
<div class="a" style="left:335.8px;top:404.7px;width:9.8px;height:9.8px;background:#3a3a3a;"></div>
<div class="a" style="left:350.2px;top:403.7px;width:47.8px;height:11.8px;background:#1e1e1e;"></div>
<div class="t " style="left:354.5px;top:404px;color:#d0d0d0;letter-spacing:-1px">なし</div>
<svg style="left:389px;top:407.90000000000003px" width="6" height="4" viewBox="0 0 6 4"><path d="M0.4 0.4 L3 3.2 L5.6 0.4" fill="none" stroke="#b0b0b0" stroke-width="1"/></svg>
<div class="a" style="left:405.5px;top:404.7px;width:9.8px;height:9.8px;background:#3a3a3a;"></div>
<div class="a" style="left:416.8px;top:404.7px;width:9.8px;height:9.8px;background:#3a3a3a;"></div>
<div class="a" style="left:428px;top:404.7px;width:9.8px;height:9.8px;background:#3a3a3a;"></div>
<div class="a" style="left:473px;top:404.7px;width:9.8px;height:9.8px;background:#3a3a3a;"></div>
<div class="a" style="left:484.4px;top:404.7px;width:9.8px;height:9.8px;background:#3a3a3a;"></div>
<svg style="left:406.4px;top:405.7px" width="8" height="8" viewBox="0 0 8 8"><path d="M0.6 3.2 C0.6 -0.2 7.4 -0.2 7.4 3.2 Z" fill="#c8c8c8"/><path d="M0 4.4 H8 M0.8 6 H7.2 M4 3 V7.6" stroke="#c8c8c8" stroke-width="0.8"/></svg>
<svg style="left:417.7px;top:405.7px" width="8" height="8" viewBox="0 0 8 8"><circle cx="4" cy="4" r="1.7" fill="none" stroke="#8a8a8a" stroke-width="0.8"/><path d="M4 0 V1.8 M4 6.2 V8 M0 4 H1.8 M6.2 4 H8 M1.2 1.2 L2.4 2.4 M5.6 5.6 L6.8 6.8 M6.8 1.2 L5.6 2.4 M2.4 5.6 L1.2 6.8" stroke="#8a8a8a" stroke-width="0.7"/></svg>
<svg style="left:429px;top:405.7px" width="9" height="9" viewBox="0 0 9 9"><path d="M0.6 8 L8 0.6" stroke="#c8c8c8" stroke-width="1"/></svg>
<svg style="left:461.8px;top:404.90000000000003px" width="10" height="10" viewBox="0 0 10 10"><circle cx="6.4" cy="3.4" r="3" fill="#555" stroke="#9a9a9a" stroke-width="0.8"/><circle cx="5" cy="4.8" r="3" fill="#555" stroke="#9a9a9a" stroke-width="0.8"/><circle cx="3.6" cy="6.2" r="3" fill="#666" stroke="#9a9a9a" stroke-width="0.8"/></svg>
<svg style="left:508.4px;top:404.90000000000003px" width="10" height="10" viewBox="0 0 10 10"><path d="M5.4 5 C4.6 4.2 3.6 5.2 4.2 6.2 C5 7.4 7 6.8 7.2 5 C7.4 3 5 1.8 3.2 3 C1.2 4.4 2 7.8 4.6 8.4 C7.4 9 9.6 6.4 8.8 3.6 C8.2 1.6 6.2 0.6 4.4 0.8" fill="none" stroke="#9a9a9a" stroke-width="0.8"/></svg>
<div class="a" style="left:522.2px;top:403.7px;width:67.2px;height:11.8px;background:#1e1e1e;"></div>
<div class="t " style="left:527px;top:404px;color:#d0d0d0;letter-spacing:-1px">なし</div>
<svg style="left:580px;top:407.90000000000003px" width="6" height="4" viewBox="0 0 6 4"><path d="M0.4 0.4 L3 3.2 L5.6 0.4" fill="none" stroke="#b0b0b0" stroke-width="1"/></svg>
<div class="a" style="left:2px;top:417.6px;width:601.5px;height:14.3px;background:#282828;"></div>
<svg style="left:6px;top:420.8px" width="5" height="6.4" viewBox="0 0 5 6.4"><path d="M4.6 0 V6.4 L0 3.2 Z" fill="#4a4a4a"/></svg>
<div class="a" style="left:15px;top:418.8px;width:10.5px;height:11px;background:#252525;border:0.5px solid #323232;"></div>
<svg style="left:16.8px;top:420.6px" width="7" height="7" viewBox="0 0 7 7"><path d="M3.5 0 L7 3.5 L3.5 7 L0 3.5 Z" fill="#0a8cf8"/></svg>
<svg style="left:29px;top:420.8px" width="5" height="6.4" viewBox="0 0 5 6.4"><path d="M0 0 V6.4 L4.6 3.2 Z" fill="#4a4a4a"/></svg>
<svg style="left:95.6px;top:419.40000000000003px" width="9" height="11" viewBox="0 0 9 11"><circle cx="4.4" cy="6" r="3.8" fill="none" stroke="#2d8ceb" stroke-width="1.2"/><path d="M3.2 0.8 H5.6 M4.4 0.8 V2.2 M4.4 6 L6.4 3.6" stroke="#2d8ceb" stroke-width="0.9" fill="none"/></svg>
<svg style="left:109px;top:420.20000000000005px" width="9" height="8.4" viewBox="0 0 9 8.4"><path d="M0.5 0 V8 H9" fill="none" stroke="#b8b8b8" stroke-width="0.9"/><path d="M1.6 3 L3.4 6 L5.4 2.6 H8.4" fill="none" stroke="#b8b8b8" stroke-width="0.8"/></svg>
<div class="a" style="left:121px;top:419.0px;width:155.5px;height:11.8px;background:#4d4d4d;"></div>
<div class="t " style="left:123.4px;top:419px;color:#e0e0e0;letter-spacing:-0.8px">不透明度</div>
<div class="t " style="left:406.5px;top:419px;color:#a8a8a8;font-weight:bold;letter-spacing:-0.2px"><span class="bl">100</span>%</div>
<div class="a" style="left:2px;top:431.90000000000003px;width:601.5px;height:12.9px;background:#323232;"></div>
<div class="a" style="left:4px;top:433.1px;width:9.5px;height:10.6px;background:#242424;"></div>
<svg style="left:4.8px;top:435.50000000000006px" width="8" height="6" viewBox="0 0 8 6"><path d="M0.2 3 C2 -0.4 6 -0.4 7.8 3 C6 6.4 2 6.4 0.2 3 Z" fill="#e4e4e4"/><circle cx="4" cy="3" r="1.5" fill="#333"/></svg>
<div class="a" style="left:26.2px;top:433.1px;width:9.8px;height:9.9px;background:#202020;"></div>
<div class="a" style="left:37.4px;top:433.1px;width:9.8px;height:9.9px;background:#202020;"></div>
<svg style="left:55.2px;top:435.50000000000006px" width="5.2" height="5.8" viewBox="0 0 5.2 5.8"><path d="M0 0 H5.2 L2.6 5.8 Z" fill="#d8d8d8"/></svg>
<div class="a" style="left:64.2px;top:433.3px;width:11px;height:10.4px;background:#6e72e8;"></div>
<div class="t " style="left:80.5px;top:433px;color:#b8b8b8">8</div>
<div class="t " style="left:102.5px;top:432px;color:#d8d8d8;font-size:12px;font-family:'DejaVu Sans',sans-serif">★</div>
<div class="t " style="left:117.7px;top:433px;color:#c4c4c4;letter-spacing:-0.8px">カメラ</div>
<div class="a" style="left:280.4px;top:432.3px;width:51.6px;height:11.8px;background:#1e1e1e;"></div>
<div class="t " style="left:284.7px;top:433px;color:#d0d0d0;letter-spacing:-0.7px">通常</div>
<svg style="left:323px;top:436.50000000000006px" width="6" height="4" viewBox="0 0 6 4"><path d="M0.4 0.4 L3 3.2 L5.6 0.4" fill="none" stroke="#b0b0b0" stroke-width="1"/></svg>
<div class="a" style="left:335.8px;top:433.3px;width:9.8px;height:9.8px;background:#262626;"></div>
<div class="a" style="left:350.2px;top:432.3px;width:47.8px;height:11.8px;background:#1e1e1e;"></div>
<div class="t " style="left:354.5px;top:433px;color:#d0d0d0;letter-spacing:-1px">なし</div>
<svg style="left:389px;top:436.50000000000006px" width="6" height="4" viewBox="0 0 6 4"><path d="M0.4 0.4 L3 3.2 L5.6 0.4" fill="none" stroke="#b0b0b0" stroke-width="1"/></svg>
<div class="a" style="left:405.5px;top:433.3px;width:9.8px;height:9.8px;background:#262626;"></div>
<div class="a" style="left:416.8px;top:433.3px;width:9.8px;height:9.8px;background:#262626;"></div>
<div class="a" style="left:428px;top:433.3px;width:9.8px;height:9.8px;background:#262626;"></div>
<div class="a" style="left:473px;top:433.3px;width:9.8px;height:9.8px;background:#262626;"></div>
<div class="a" style="left:484.4px;top:433.3px;width:9.8px;height:9.8px;background:#262626;"></div>
<svg style="left:406.4px;top:434.3px" width="8" height="8" viewBox="0 0 8 8"><path d="M0.6 3.2 C0.6 -0.2 7.4 -0.2 7.4 3.2 Z" fill="#c8c8c8"/><path d="M0 4.4 H8 M0.8 6 H7.2 M4 3 V7.6" stroke="#c8c8c8" stroke-width="0.8"/></svg>
<svg style="left:417.7px;top:434.3px" width="8" height="8" viewBox="0 0 8 8"><circle cx="4" cy="4" r="1.7" fill="none" stroke="#8a8a8a" stroke-width="0.8"/><path d="M4 0 V1.8 M4 6.2 V8 M0 4 H1.8 M6.2 4 H8 M1.2 1.2 L2.4 2.4 M5.6 5.6 L6.8 6.8 M6.8 1.2 L5.6 2.4 M2.4 5.6 L1.2 6.8" stroke="#8a8a8a" stroke-width="0.7"/></svg>
<svg style="left:429px;top:434.3px" width="9" height="9" viewBox="0 0 9 9"><path d="M0.6 8 L8 0.6" stroke="#c8c8c8" stroke-width="1"/></svg>
<svg style="left:461.8px;top:433.50000000000006px" width="10" height="10" viewBox="0 0 10 10"><circle cx="6.4" cy="3.4" r="3" fill="#555" stroke="#9a9a9a" stroke-width="0.8"/><circle cx="5" cy="4.8" r="3" fill="#555" stroke="#9a9a9a" stroke-width="0.8"/><circle cx="3.6" cy="6.2" r="3" fill="#666" stroke="#9a9a9a" stroke-width="0.8"/></svg>
<svg style="left:508.4px;top:433.50000000000006px" width="10" height="10" viewBox="0 0 10 10"><path d="M5.4 5 C4.6 4.2 3.6 5.2 4.2 6.2 C5 7.4 7 6.8 7.2 5 C7.4 3 5 1.8 3.2 3 C1.2 4.4 2 7.8 4.6 8.4 C7.4 9 9.6 6.4 8.8 3.6 C8.2 1.6 6.2 0.6 4.4 0.8" fill="none" stroke="#9a9a9a" stroke-width="0.8"/></svg>
<div class="a" style="left:522.2px;top:432.3px;width:67.2px;height:11.8px;background:#1e1e1e;"></div>
<div class="t " style="left:527px;top:433px;color:#d0d0d0;letter-spacing:-1px">なし</div>
<svg style="left:580px;top:436.50000000000006px" width="6" height="4" viewBox="0 0 6 4"><path d="M0.4 0.4 L3 3.2 L5.6 0.4" fill="none" stroke="#b0b0b0" stroke-width="1"/></svg>
<div class="a" style="left:2px;top:446.20000000000005px;width:601.5px;height:14.3px;background:#282828;"></div>
<svg style="left:6px;top:449.40000000000003px" width="5" height="6.4" viewBox="0 0 5 6.4"><path d="M4.6 0 V6.4 L0 3.2 Z" fill="#c8c8c8"/></svg>
<div class="a" style="left:15px;top:447.40000000000003px;width:10.5px;height:11px;background:#252525;border:0.5px solid #323232;"></div>
<svg style="left:16.8px;top:449.20000000000005px" width="7" height="7" viewBox="0 0 7 7"><path d="M3.5 0 L7 3.5 L3.5 7 L0 3.5 Z" fill="#0a8cf8"/></svg>
<svg style="left:29px;top:449.40000000000003px" width="5" height="6.4" viewBox="0 0 5 6.4"><path d="M0 0 V6.4 L4.6 3.2 Z" fill="#4a4a4a"/></svg>
<svg style="left:95.6px;top:448.00000000000006px" width="9" height="11" viewBox="0 0 9 11"><circle cx="4.4" cy="6" r="3.8" fill="none" stroke="#2d8ceb" stroke-width="1.2"/><path d="M3.2 0.8 H5.6 M4.4 0.8 V2.2 M4.4 6 L6.4 3.6" stroke="#2d8ceb" stroke-width="0.9" fill="none"/></svg>
<svg style="left:109px;top:448.80000000000007px" width="9" height="8.4" viewBox="0 0 9 8.4"><path d="M0.5 0 V8 H9" fill="none" stroke="#b8b8b8" stroke-width="0.9"/><path d="M1.6 3 L3.4 6 L5.4 2.6 H8.4" fill="none" stroke="#b8b8b8" stroke-width="0.8"/></svg>
<div class="t " style="left:124px;top:448px;color:#d0d0d0;letter-spacing:-1.1px">スケール</div>
<svg style="left:406px;top:449.80000000000007px" width="9" height="6" viewBox="0 0 9 6"><rect x="0.6" y="0.8" width="4.6" height="3.6" rx="1.8" fill="none" stroke="#c8c8c8" stroke-width="1"/><rect x="3.6" y="0.8" width="4.6" height="3.6" rx="1.8" fill="none" stroke="#c8c8c8" stroke-width="1"/></svg>
<div class="t " style="left:420px;top:448px;color:#a8a8a8;font-weight:bold;letter-spacing:0.03px"><span class="bl">100.0,100.0</span>%</div>
<div class="a" style="left:2px;top:460.5px;width:601.5px;height:12.9px;background:#323232;"></div>
<div class="a" style="left:4px;top:461.7px;width:9.5px;height:10.6px;background:#242424;"></div>
<svg style="left:4.8px;top:464.1px" width="8" height="6" viewBox="0 0 8 6"><path d="M0.2 3 C2 -0.4 6 -0.4 7.8 3 C6 6.4 2 6.4 0.2 3 Z" fill="#e4e4e4"/><circle cx="4" cy="3" r="1.5" fill="#333"/></svg>
<div class="a" style="left:26.2px;top:461.7px;width:9.8px;height:9.9px;background:#202020;"></div>
<div class="a" style="left:37.4px;top:461.7px;width:9.8px;height:9.9px;background:#202020;"></div>
<svg style="left:55.2px;top:464.1px" width="5.2" height="5.8" viewBox="0 0 5.2 5.8"><path d="M0 0 H5.2 L2.6 5.8 Z" fill="#d8d8d8"/></svg>
<div class="a" style="left:64.2px;top:461.9px;width:11px;height:10.4px;background:#6e72e8;"></div>
<div class="t " style="left:80.5px;top:461px;color:#b8b8b8">9</div>
<div class="t " style="left:102.5px;top:460px;color:#d8d8d8;font-size:12px;font-family:'DejaVu Sans',sans-serif">★</div>
<div class="t " style="left:117.7px;top:461px;color:#c4c4c4;letter-spacing:-0.8px">スピーカー</div>
<div class="a" style="left:280.4px;top:460.9px;width:51.6px;height:11.8px;background:#1e1e1e;"></div>
<div class="t " style="left:284.7px;top:461px;color:#d0d0d0;letter-spacing:-0.7px">通常</div>
<svg style="left:323px;top:465.1px" width="6" height="4" viewBox="0 0 6 4"><path d="M0.4 0.4 L3 3.2 L5.6 0.4" fill="none" stroke="#b0b0b0" stroke-width="1"/></svg>
<div class="a" style="left:335.8px;top:461.9px;width:9.8px;height:9.8px;background:#262626;"></div>
<div class="a" style="left:350.2px;top:460.9px;width:47.8px;height:11.8px;background:#1e1e1e;"></div>
<div class="t " style="left:354.5px;top:461px;color:#d0d0d0;letter-spacing:-1px">なし</div>
<svg style="left:389px;top:465.1px" width="6" height="4" viewBox="0 0 6 4"><path d="M0.4 0.4 L3 3.2 L5.6 0.4" fill="none" stroke="#b0b0b0" stroke-width="1"/></svg>
<div class="a" style="left:405.5px;top:461.9px;width:9.8px;height:9.8px;background:#262626;"></div>
<div class="a" style="left:416.8px;top:461.9px;width:9.8px;height:9.8px;background:#262626;"></div>
<div class="a" style="left:428px;top:461.9px;width:9.8px;height:9.8px;background:#262626;"></div>
<div class="a" style="left:473px;top:461.9px;width:9.8px;height:9.8px;background:#262626;"></div>
<div class="a" style="left:484.4px;top:461.9px;width:9.8px;height:9.8px;background:#262626;"></div>
<svg style="left:406.4px;top:462.9px" width="8" height="8" viewBox="0 0 8 8"><path d="M0.6 3.2 C0.6 -0.2 7.4 -0.2 7.4 3.2 Z" fill="#c8c8c8"/><path d="M0 4.4 H8 M0.8 6 H7.2 M4 3 V7.6" stroke="#c8c8c8" stroke-width="0.8"/></svg>
<svg style="left:417.7px;top:462.9px" width="8" height="8" viewBox="0 0 8 8"><circle cx="4" cy="4" r="1.7" fill="none" stroke="#8a8a8a" stroke-width="0.8"/><path d="M4 0 V1.8 M4 6.2 V8 M0 4 H1.8 M6.2 4 H8 M1.2 1.2 L2.4 2.4 M5.6 5.6 L6.8 6.8 M6.8 1.2 L5.6 2.4 M2.4 5.6 L1.2 6.8" stroke="#8a8a8a" stroke-width="0.7"/></svg>
<svg style="left:429px;top:462.9px" width="9" height="9" viewBox="0 0 9 9"><path d="M0.6 8 L8 0.6" stroke="#c8c8c8" stroke-width="1"/></svg>
<svg style="left:461.8px;top:462.1px" width="10" height="10" viewBox="0 0 10 10"><circle cx="6.4" cy="3.4" r="3" fill="#555" stroke="#9a9a9a" stroke-width="0.8"/><circle cx="5" cy="4.8" r="3" fill="#555" stroke="#9a9a9a" stroke-width="0.8"/><circle cx="3.6" cy="6.2" r="3" fill="#666" stroke="#9a9a9a" stroke-width="0.8"/></svg>
<svg style="left:508.4px;top:462.1px" width="10" height="10" viewBox="0 0 10 10"><path d="M5.4 5 C4.6 4.2 3.6 5.2 4.2 6.2 C5 7.4 7 6.8 7.2 5 C7.4 3 5 1.8 3.2 3 C1.2 4.4 2 7.8 4.6 8.4 C7.4 9 9.6 6.4 8.8 3.6 C8.2 1.6 6.2 0.6 4.4 0.8" fill="none" stroke="#9a9a9a" stroke-width="0.8"/></svg>
<div class="a" style="left:522.2px;top:460.9px;width:67.2px;height:11.8px;background:#1e1e1e;"></div>
<div class="t " style="left:527px;top:461px;color:#d0d0d0;letter-spacing:-1px">なし</div>
<svg style="left:580px;top:465.1px" width="6" height="4" viewBox="0 0 6 4"><path d="M0.4 0.4 L3 3.2 L5.6 0.4" fill="none" stroke="#b0b0b0" stroke-width="1"/></svg>
<div class="a" style="left:2px;top:474.8px;width:601.5px;height:14.3px;background:#282828;"></div>
<svg style="left:6px;top:478.0px" width="5" height="6.4" viewBox="0 0 5 6.4"><path d="M4.6 0 V6.4 L0 3.2 Z" fill="#c8c8c8"/></svg>
<div class="a" style="left:15px;top:476.0px;width:10.5px;height:11px;background:#252525;border:0.5px solid #323232;"></div>
<svg style="left:16.8px;top:477.8px" width="7" height="7" viewBox="0 0 7 7"><path d="M3.5 0 L7 3.5 L3.5 7 L0 3.5 Z" fill="#0a8cf8"/></svg>
<svg style="left:29px;top:478.0px" width="5" height="6.4" viewBox="0 0 5 6.4"><path d="M0 0 V6.4 L4.6 3.2 Z" fill="#4a4a4a"/></svg>
<svg style="left:95.6px;top:476.6px" width="9" height="11" viewBox="0 0 9 11"><circle cx="4.4" cy="6" r="3.8" fill="none" stroke="#2d8ceb" stroke-width="1.2"/><path d="M3.2 0.8 H5.6 M4.4 0.8 V2.2 M4.4 6 L6.4 3.6" stroke="#2d8ceb" stroke-width="0.9" fill="none"/></svg>
<svg style="left:109px;top:477.40000000000003px" width="9" height="8.4" viewBox="0 0 9 8.4"><path d="M0.5 0 V8 H9" fill="none" stroke="#b8b8b8" stroke-width="0.9"/><path d="M1.6 3 L3.4 6 L5.4 2.6 H8.4" fill="none" stroke="#b8b8b8" stroke-width="0.8"/></svg>
<div class="t " style="left:124px;top:476px;color:#d0d0d0;letter-spacing:-1.1px">スケール</div>
<svg style="left:406px;top:478.40000000000003px" width="9" height="6" viewBox="0 0 9 6"><rect x="0.6" y="0.8" width="4.6" height="3.6" rx="1.8" fill="none" stroke="#c8c8c8" stroke-width="1"/><rect x="3.6" y="0.8" width="4.6" height="3.6" rx="1.8" fill="none" stroke="#c8c8c8" stroke-width="1"/></svg>
<div class="t " style="left:420px;top:476px;color:#a8a8a8;font-weight:bold;letter-spacing:0.03px"><span class="bl">100.0,100.0</span>%</div>
<div class="a" style="left:2px;top:489.1px;width:601.5px;height:12.9px;background:#323232;"></div>
<div class="a" style="left:4px;top:490.3px;width:9.5px;height:10.6px;background:#242424;"></div>
<svg style="left:4.8px;top:492.70000000000005px" width="8" height="6" viewBox="0 0 8 6"><path d="M0.2 3 C2 -0.4 6 -0.4 7.8 3 C6 6.4 2 6.4 0.2 3 Z" fill="#e4e4e4"/><circle cx="4" cy="3" r="1.5" fill="#333"/></svg>
<div class="a" style="left:26.2px;top:490.3px;width:9.8px;height:9.9px;background:#202020;"></div>
<div class="a" style="left:37.4px;top:490.3px;width:9.8px;height:9.9px;background:#202020;"></div>
<svg style="left:55.2px;top:492.70000000000005px" width="5.2" height="5.8" viewBox="0 0 5.2 5.8"><path d="M0 0 H5.2 L2.6 5.8 Z" fill="#d8d8d8"/></svg>
<div class="a" style="left:64.2px;top:490.5px;width:11px;height:10.4px;background:#6e72e8;"></div>
<div class="t " style="left:80.5px;top:490px;color:#b8b8b8">10</div>
<div class="t " style="left:102.5px;top:489px;color:#d8d8d8;font-size:12px;font-family:'DejaVu Sans',sans-serif">★</div>
<div class="t " style="left:117.7px;top:490px;color:#c4c4c4;letter-spacing:-0.8px">ホームボタン</div>
<div class="a" style="left:280.4px;top:489.5px;width:51.6px;height:11.8px;background:#1e1e1e;"></div>
<div class="t " style="left:284.7px;top:490px;color:#d0d0d0;letter-spacing:-0.7px">通常</div>
<svg style="left:323px;top:493.70000000000005px" width="6" height="4" viewBox="0 0 6 4"><path d="M0.4 0.4 L3 3.2 L5.6 0.4" fill="none" stroke="#b0b0b0" stroke-width="1"/></svg>
<div class="a" style="left:335.8px;top:490.5px;width:9.8px;height:9.8px;background:#262626;"></div>
<div class="a" style="left:350.2px;top:489.5px;width:47.8px;height:11.8px;background:#1e1e1e;"></div>
<div class="t " style="left:354.5px;top:490px;color:#d0d0d0;letter-spacing:-1px">なし</div>
<svg style="left:389px;top:493.70000000000005px" width="6" height="4" viewBox="0 0 6 4"><path d="M0.4 0.4 L3 3.2 L5.6 0.4" fill="none" stroke="#b0b0b0" stroke-width="1"/></svg>
<div class="a" style="left:405.5px;top:490.5px;width:9.8px;height:9.8px;background:#262626;"></div>
<div class="a" style="left:416.8px;top:490.5px;width:9.8px;height:9.8px;background:#262626;"></div>
<div class="a" style="left:428px;top:490.5px;width:9.8px;height:9.8px;background:#262626;"></div>
<div class="a" style="left:473px;top:490.5px;width:9.8px;height:9.8px;background:#262626;"></div>
<div class="a" style="left:484.4px;top:490.5px;width:9.8px;height:9.8px;background:#262626;"></div>
<svg style="left:406.4px;top:491.5px" width="8" height="8" viewBox="0 0 8 8"><path d="M0.6 3.2 C0.6 -0.2 7.4 -0.2 7.4 3.2 Z" fill="#c8c8c8"/><path d="M0 4.4 H8 M0.8 6 H7.2 M4 3 V7.6" stroke="#c8c8c8" stroke-width="0.8"/></svg>
<svg style="left:417.7px;top:491.5px" width="8" height="8" viewBox="0 0 8 8"><circle cx="4" cy="4" r="1.7" fill="none" stroke="#8a8a8a" stroke-width="0.8"/><path d="M4 0 V1.8 M4 6.2 V8 M0 4 H1.8 M6.2 4 H8 M1.2 1.2 L2.4 2.4 M5.6 5.6 L6.8 6.8 M6.8 1.2 L5.6 2.4 M2.4 5.6 L1.2 6.8" stroke="#8a8a8a" stroke-width="0.7"/></svg>
<svg style="left:429px;top:491.5px" width="9" height="9" viewBox="0 0 9 9"><path d="M0.6 8 L8 0.6" stroke="#c8c8c8" stroke-width="1"/></svg>
<svg style="left:461.8px;top:490.70000000000005px" width="10" height="10" viewBox="0 0 10 10"><circle cx="6.4" cy="3.4" r="3" fill="#555" stroke="#9a9a9a" stroke-width="0.8"/><circle cx="5" cy="4.8" r="3" fill="#555" stroke="#9a9a9a" stroke-width="0.8"/><circle cx="3.6" cy="6.2" r="3" fill="#666" stroke="#9a9a9a" stroke-width="0.8"/></svg>
<svg style="left:508.4px;top:490.70000000000005px" width="10" height="10" viewBox="0 0 10 10"><path d="M5.4 5 C4.6 4.2 3.6 5.2 4.2 6.2 C5 7.4 7 6.8 7.2 5 C7.4 3 5 1.8 3.2 3 C1.2 4.4 2 7.8 4.6 8.4 C7.4 9 9.6 6.4 8.8 3.6 C8.2 1.6 6.2 0.6 4.4 0.8" fill="none" stroke="#9a9a9a" stroke-width="0.8"/></svg>
<div class="a" style="left:522.2px;top:489.5px;width:67.2px;height:11.8px;background:#1e1e1e;"></div>
<div class="t " style="left:527px;top:490px;color:#d0d0d0;letter-spacing:-1px">なし</div>
<svg style="left:580px;top:493.70000000000005px" width="6" height="4" viewBox="0 0 6 4"><path d="M0.4 0.4 L3 3.2 L5.6 0.4" fill="none" stroke="#b0b0b0" stroke-width="1"/></svg>
<div class="a" style="left:2px;top:503.40000000000003px;width:601.5px;height:14.3px;background:#282828;"></div>
<svg style="left:6px;top:506.6px" width="5" height="6.4" viewBox="0 0 5 6.4"><path d="M4.6 0 V6.4 L0 3.2 Z" fill="#c8c8c8"/></svg>
<div class="a" style="left:15px;top:504.6px;width:10.5px;height:11px;background:#252525;border:0.5px solid #323232;"></div>
<svg style="left:16.8px;top:506.40000000000003px" width="7" height="7" viewBox="0 0 7 7"><path d="M3.5 0 L7 3.5 L3.5 7 L0 3.5 Z" fill="#0a8cf8"/></svg>
<svg style="left:29px;top:506.6px" width="5" height="6.4" viewBox="0 0 5 6.4"><path d="M0 0 V6.4 L4.6 3.2 Z" fill="#4a4a4a"/></svg>
<svg style="left:95.6px;top:505.20000000000005px" width="9" height="11" viewBox="0 0 9 11"><circle cx="4.4" cy="6" r="3.8" fill="none" stroke="#2d8ceb" stroke-width="1.2"/><path d="M3.2 0.8 H5.6 M4.4 0.8 V2.2 M4.4 6 L6.4 3.6" stroke="#2d8ceb" stroke-width="0.9" fill="none"/></svg>
<svg style="left:109px;top:506.00000000000006px" width="9" height="8.4" viewBox="0 0 9 8.4"><path d="M0.5 0 V8 H9" fill="none" stroke="#b8b8b8" stroke-width="0.9"/><path d="M1.6 3 L3.4 6 L5.4 2.6 H8.4" fill="none" stroke="#b8b8b8" stroke-width="0.8"/></svg>
<div class="t " style="left:124px;top:505px;color:#d0d0d0;letter-spacing:-1.1px">スケール</div>
<svg style="left:406px;top:507.00000000000006px" width="9" height="6" viewBox="0 0 9 6"><rect x="0.6" y="0.8" width="4.6" height="3.6" rx="1.8" fill="none" stroke="#c8c8c8" stroke-width="1"/><rect x="3.6" y="0.8" width="4.6" height="3.6" rx="1.8" fill="none" stroke="#c8c8c8" stroke-width="1"/></svg>
<div class="t " style="left:420px;top:505px;color:#a8a8a8;font-weight:bold;letter-spacing:0.03px"><span class="bl">100.0,100.0</span>%</div>
<div class="a" style="left:2px;top:517.7px;width:601.5px;height:12.799999999999955px;background:#323232;"></div>
<div class="a" style="left:4px;top:518.9000000000001px;width:9.5px;height:10.6px;background:#242424;"></div>
<svg style="left:4.8px;top:521.3000000000001px" width="8" height="6" viewBox="0 0 8 6"><path d="M0.2 3 C2 -0.4 6 -0.4 7.8 3 C6 6.4 2 6.4 0.2 3 Z" fill="#e4e4e4"/><circle cx="4" cy="3" r="1.5" fill="#333"/></svg>
<div class="a" style="left:26.2px;top:518.9000000000001px;width:9.8px;height:9.9px;background:#202020;"></div>
<div class="a" style="left:37.4px;top:518.9000000000001px;width:9.8px;height:9.9px;background:#202020;"></div>
<svg style="left:55.2px;top:521.3000000000001px" width="5.2" height="5.8" viewBox="0 0 5.2 5.8"><path d="M0 0 H5.2 L2.6 5.8 Z" fill="#d8d8d8"/></svg>
<div class="a" style="left:64.2px;top:519.1px;width:11px;height:10.4px;background:#6e72e8;"></div>
<div class="t " style="left:80.5px;top:518px;color:#b8b8b8">11</div>
<div class="t " style="left:102.5px;top:517px;color:#d8d8d8;font-size:12px;font-family:'DejaVu Sans',sans-serif">★</div>
<div class="t " style="left:117.7px;top:518px;color:#c4c4c4;letter-spacing:-0.8px">画面</div>
<div class="a" style="left:280.4px;top:518.1px;width:51.6px;height:11.8px;background:#1e1e1e;"></div>
<div class="t " style="left:284.7px;top:518px;color:#d0d0d0;letter-spacing:-0.7px">通常</div>
<svg style="left:323px;top:522.3000000000001px" width="6" height="4" viewBox="0 0 6 4"><path d="M0.4 0.4 L3 3.2 L5.6 0.4" fill="none" stroke="#b0b0b0" stroke-width="1"/></svg>
<div class="a" style="left:335.8px;top:519.1px;width:9.8px;height:9.8px;background:#262626;"></div>
<div class="a" style="left:350.2px;top:518.1px;width:47.8px;height:11.8px;background:#1e1e1e;"></div>
<div class="t " style="left:354.5px;top:518px;color:#d0d0d0;letter-spacing:-1px">なし</div>
<svg style="left:389px;top:522.3000000000001px" width="6" height="4" viewBox="0 0 6 4"><path d="M0.4 0.4 L3 3.2 L5.6 0.4" fill="none" stroke="#b0b0b0" stroke-width="1"/></svg>
<div class="a" style="left:405.5px;top:519.1px;width:9.8px;height:9.8px;background:#262626;"></div>
<div class="a" style="left:416.8px;top:519.1px;width:9.8px;height:9.8px;background:#262626;"></div>
<div class="a" style="left:428px;top:519.1px;width:9.8px;height:9.8px;background:#262626;"></div>
<div class="a" style="left:473px;top:519.1px;width:9.8px;height:9.8px;background:#262626;"></div>
<div class="a" style="left:484.4px;top:519.1px;width:9.8px;height:9.8px;background:#262626;"></div>
<svg style="left:406.4px;top:520.1px" width="8" height="8" viewBox="0 0 8 8"><path d="M0.6 3.2 C0.6 -0.2 7.4 -0.2 7.4 3.2 Z" fill="#c8c8c8"/><path d="M0 4.4 H8 M0.8 6 H7.2 M4 3 V7.6" stroke="#c8c8c8" stroke-width="0.8"/></svg>
<svg style="left:417.7px;top:520.1px" width="8" height="8" viewBox="0 0 8 8"><circle cx="4" cy="4" r="1.7" fill="none" stroke="#8a8a8a" stroke-width="0.8"/><path d="M4 0 V1.8 M4 6.2 V8 M0 4 H1.8 M6.2 4 H8 M1.2 1.2 L2.4 2.4 M5.6 5.6 L6.8 6.8 M6.8 1.2 L5.6 2.4 M2.4 5.6 L1.2 6.8" stroke="#8a8a8a" stroke-width="0.7"/></svg>
<svg style="left:429px;top:520.1px" width="9" height="9" viewBox="0 0 9 9"><path d="M0.6 8 L8 0.6" stroke="#c8c8c8" stroke-width="1"/></svg>
<svg style="left:461.8px;top:519.3000000000001px" width="10" height="10" viewBox="0 0 10 10"><circle cx="6.4" cy="3.4" r="3" fill="#555" stroke="#9a9a9a" stroke-width="0.8"/><circle cx="5" cy="4.8" r="3" fill="#555" stroke="#9a9a9a" stroke-width="0.8"/><circle cx="3.6" cy="6.2" r="3" fill="#666" stroke="#9a9a9a" stroke-width="0.8"/></svg>
<svg style="left:508.4px;top:519.3000000000001px" width="10" height="10" viewBox="0 0 10 10"><path d="M5.4 5 C4.6 4.2 3.6 5.2 4.2 6.2 C5 7.4 7 6.8 7.2 5 C7.4 3 5 1.8 3.2 3 C1.2 4.4 2 7.8 4.6 8.4 C7.4 9 9.6 6.4 8.8 3.6 C8.2 1.6 6.2 0.6 4.4 0.8" fill="none" stroke="#9a9a9a" stroke-width="0.8"/></svg>
<div class="a" style="left:522.2px;top:518.1px;width:67.2px;height:11.8px;background:#1e1e1e;"></div>
<div class="t " style="left:527px;top:518px;color:#d0d0d0;letter-spacing:-1px">なし</div>
<svg style="left:580px;top:522.3000000000001px" width="6" height="4" viewBox="0 0 6 4"><path d="M0.4 0.4 L3 3.2 L5.6 0.4" fill="none" stroke="#b0b0b0" stroke-width="1"/></svg>
<div class="a" style="left:2px;top:530.5px;width:602px;height:1px;background:#161616;"></div>
<div class="a" style="left:2px;top:531.5px;width:602px;height:11px;background:#282828;"></div>
<svg style="left:4.7px;top:533px" width="10" height="8" viewBox="0 0 10 8"><rect x="0.5" y="0.5" width="6" height="5" rx="1" fill="none" stroke="#2d8ceb" stroke-width="1"/><rect x="3" y="2.6" width="6" height="5" rx="1" fill="#1a3a5e" stroke="#2d8ceb" stroke-width="1"/></svg>
<svg style="left:18.7px;top:533px" width="10" height="8" viewBox="0 0 10 8"><circle cx="3.6" cy="3.2" r="2.9" fill="none" stroke="#2d8ceb" stroke-width="1"/><rect x="3.6" y="3" width="5.4" height="4.6" fill="#1a3a5e" stroke="#2d8ceb" stroke-width="1"/></svg>
<svg style="left:32px;top:533px" width="9" height="8" viewBox="0 0 9 8"><path d="M2.8 0.4 C1.6 0.4 2.4 3.6 0.6 4 C2.4 4.4 1.6 7.6 2.8 7.6 M5.8 0.4 C7 0.4 6.2 3.6 8 4 C6.2 4.4 7 7.6 5.8 7.6" fill="none" stroke="#b8b8b8" stroke-width="1.1"/><path d="M3.6 1 V7 M5 1 V7" stroke="#b8b8b8" stroke-width="0.7"/></svg>
<div class="a" style="left:604px;top:363px;width:1px;height:180px;background:#141414;"></div>
<div class="a" style="left:605.5px;top:363px;width:405px;height:40.3px;background:#282828;"></div>
<div class="a" style="left:604.5px;top:365px;width:406px;height:8.5px;background:#161616;"></div>
<div class="a" style="left:609px;top:366px;width:175px;height:6.5px;background:#6c6c6c;"></div>
<div class="a" style="left:784px;top:366px;width:221px;height:6.5px;background:#3b3833;border:0.5px solid #4a443a;"></div>
<svg style="left:604.5px;top:366px" width="6" height="6.5" viewBox="0 0 6 6.5"><path d="M5.5 0 V6.5 H3.4 A3.2 3.2 0 0 1 3.4 0 Z" fill="#1e90ff"/></svg>
<svg style="left:783px;top:366px" width="6" height="6.5" viewBox="0 0 6 6.5"><path d="M0.5 0 V6.5 H2.6 A3.2 3.2 0 0 0 2.6 0 Z" fill="#1e90ff"/></svg>
<div class="a" style="left:650.7px;top:366.5px;width:1px;height:5.5px;background:#4a9ae8;"></div>
<div class="a" style="left:605.5px;top:373.5px;width:405px;height:14.5px;overflow:hidden">
<div class="t" style="left:-2.2500000000000226px;top:-1px;width:19.5px;text-align:center;color:#a4a4a4;font-size:8.5px;letter-spacing:-0.1px">0:00f</div>
<div class="a" style="left:4.399999999999977px;top:9.5px;width:1px;height:5px;background:#a8a8a8"></div>
<div class="t" style="left:37.31999999999997px;top:-1px;width:24px;text-align:center;color:#a4a4a4;font-size:8.5px;letter-spacing:-0.1px">00:15f</div>
<div class="a" style="left:49.019999999999975px;top:12.0px;width:1px;height:2.5px;background:#a8a8a8"></div>
<div class="t" style="left:81.93999999999997px;top:-1px;width:24px;text-align:center;color:#a4a4a4;font-size:8.5px;letter-spacing:-0.1px">01:00f</div>
<div class="a" style="left:93.63999999999997px;top:9.5px;width:1px;height:5px;background:#a8a8a8"></div>
<div class="t" style="left:126.55999999999996px;top:-1px;width:24px;text-align:center;color:#a4a4a4;font-size:8.5px;letter-spacing:-0.1px">01:15f</div>
<div class="a" style="left:138.25999999999996px;top:12.0px;width:1px;height:2.5px;background:#a8a8a8"></div>
<div class="t" style="left:171.17999999999998px;top:-1px;width:24px;text-align:center;color:#a4a4a4;font-size:8.5px;letter-spacing:-0.1px">02:00f</div>
<div class="a" style="left:182.87999999999997px;top:9.5px;width:1px;height:5px;background:#a8a8a8"></div>
<div class="t" style="left:215.79999999999998px;top:-1px;width:24px;text-align:center;color:#a4a4a4;font-size:8.5px;letter-spacing:-0.1px">02:15f</div>
<div class="a" style="left:227.49999999999997px;top:12.0px;width:1px;height:2.5px;background:#a8a8a8"></div>
<div class="t" style="left:260.41999999999996px;top:-1px;width:24px;text-align:center;color:#a4a4a4;font-size:8.5px;letter-spacing:-0.1px">03:00f</div>
<div class="a" style="left:272.11999999999995px;top:9.5px;width:1px;height:5px;background:#a8a8a8"></div>
<div class="t" style="left:305.03999999999996px;top:-1px;width:24px;text-align:center;color:#a4a4a4;font-size:8.5px;letter-spacing:-0.1px">03:15f</div>
<div class="a" style="left:316.73999999999995px;top:12.0px;width:1px;height:2.5px;background:#a8a8a8"></div>
<div class="t" style="left:349.65999999999997px;top:-1px;width:24px;text-align:center;color:#a4a4a4;font-size:8.5px;letter-spacing:-0.1px">04:00f</div>
<div class="a" style="left:361.35999999999996px;top:9.5px;width:1px;height:5px;background:#a8a8a8"></div>
<div class="t" style="left:394.28px;top:-1px;width:24px;text-align:center;color:#a4a4a4;font-size:8.5px;letter-spacing:-0.1px">04:15f</div>
<div class="a" style="left:405.97999999999996px;top:12.0px;width:1px;height:2.5px;background:#a8a8a8"></div>
</div>
<div class="a" style="left:605.5px;top:388px;width:405px;height:11px;background:#646464;"></div>
<svg style="left:605.2px;top:388px" width="5" height="11" viewBox="0 0 5 11"><path d="M4.4 0 V11 H3.6 A3.4 5.5 0 0 1 3.6 0 Z" fill="#1e90ff"/></svg>
<div class="a" style="left:605.5px;top:399px;width:405px;height:4.3px;background:#1a1a1a;"></div>
<div class="a" style="left:610px;top:400px;width:6.2000000000000455px;height:2.4px;background:#00d200;box-shadow:0 0 0 0.4px #0a5a0a;"></div>
<div class="a" style="left:651.9px;top:400px;width:3.300000000000068px;height:2.4px;background:#00d200;box-shadow:0 0 0 0.4px #0a5a0a;"></div>
<div class="a" style="left:675px;top:400px;width:3.5px;height:2.4px;background:#00d200;box-shadow:0 0 0 0.4px #0a5a0a;"></div>
<div class="a" style="left:684px;top:400px;width:3.5px;height:2.4px;background:#00d200;box-shadow:0 0 0 0.4px #0a5a0a;"></div>
<div class="a" style="left:690px;top:400px;width:6.2999999999999545px;height:2.4px;background:#00d200;box-shadow:0 0 0 0.4px #0a5a0a;"></div>
<div class="a" style="left:698.8px;top:400px;width:311.6px;height:2.4px;background:#00d200;box-shadow:0 0 0 0.4px #0a5a0a;"></div>
<div class="a" style="left:605px;top:403.3px;width:405.4px;height:14.3px;background:#404040;"></div>
<div class="a" style="left:610.4px;top:403.8px;width:400.0px;height:12.2px;background:#6468d4;background:linear-gradient(#a4a8f2 0,#7276e2 14%,#6266d8 50%,#5458d0 100%);"></div>
<svg style="left:610.0px;top:403.8px" width="1" height="12.2" viewBox="0 0 1 12.2"><rect width="0.7" height="12.2" fill="#c4c6f4"/></svg>
<div class="a" style="left:605px;top:417.6px;width:405.4px;height:14.3px;background:#333333;"></div>
<div class="a" style="left:605px;top:417.6px;width:5.2px;height:14.3px;background:#2b2b2b;"></div>
<div class="a" style="left:605.5px;top:431.1px;width:405px;height:0.8px;background:#262626;"></div>
<svg style="left:699.2px;top:420.0px" width="6.8" height="6.8" viewBox="0 0 6.8 6.8"><path d="M3.4 0 L6.8 3.4 L3.4 6.8 L0 3.4 Z" fill="#1e7ad8"/></svg>
<div class="a" style="left:605px;top:431.90000000000003px;width:405.4px;height:14.3px;background:#2b2b2b;"></div>
<div class="a" style="left:610.4px;top:432.40000000000003px;width:400.0px;height:12.8px;background:#545894;"></div>
<div class="a" style="left:605px;top:446.20000000000005px;width:405.4px;height:14.3px;background:#333333;"></div>
<div class="a" style="left:605px;top:446.20000000000005px;width:5.2px;height:14.3px;background:#2b2b2b;"></div>
<div class="a" style="left:605.5px;top:459.70000000000005px;width:405px;height:0.8px;background:#262626;"></div>
<svg style="left:607.2px;top:448.6px" width="6.8" height="6.8" viewBox="0 0 6.8 6.8"><path d="M3.4 0 L6.8 3.4 L3.4 6.8 L0 3.4 Z" fill="#b4b4b4"/></svg>
<svg style="left:699.2px;top:448.6px" width="6.8" height="6.8" viewBox="0 0 6.8 6.8"><path d="M3.4 0 L6.8 3.4 L3.4 6.8 L0 3.4 Z" fill="#b4b4b4"/></svg>
<div class="a" style="left:605px;top:460.5px;width:405.4px;height:14.3px;background:#2b2b2b;"></div>
<div class="a" style="left:610.4px;top:461.0px;width:400.0px;height:12.8px;background:#545894;"></div>
<div class="a" style="left:605px;top:474.8px;width:405.4px;height:14.3px;background:#333333;"></div>
<div class="a" style="left:605px;top:474.8px;width:5.2px;height:14.3px;background:#2b2b2b;"></div>
<div class="a" style="left:605.5px;top:488.3px;width:405px;height:0.8px;background:#262626;"></div>
<svg style="left:607.2px;top:477.2px" width="6.8" height="6.8" viewBox="0 0 6.8 6.8"><path d="M3.4 0 L6.8 3.4 L3.4 6.8 L0 3.4 Z" fill="#b4b4b4"/></svg>
<svg style="left:699.2px;top:477.2px" width="6.8" height="6.8" viewBox="0 0 6.8 6.8"><path d="M3.4 0 L6.8 3.4 L3.4 6.8 L0 3.4 Z" fill="#b4b4b4"/></svg>
<div class="a" style="left:605px;top:489.1px;width:405.4px;height:14.3px;background:#2b2b2b;"></div>
<div class="a" style="left:610.4px;top:489.6px;width:400.0px;height:12.8px;background:#545894;"></div>
<div class="a" style="left:605px;top:503.40000000000003px;width:405.4px;height:14.3px;background:#333333;"></div>
<div class="a" style="left:605px;top:503.40000000000003px;width:5.2px;height:14.3px;background:#2b2b2b;"></div>
<div class="a" style="left:605.5px;top:516.9000000000001px;width:405px;height:0.8px;background:#262626;"></div>
<svg style="left:607.2px;top:505.8px" width="6.8" height="6.8" viewBox="0 0 6.8 6.8"><path d="M3.4 0 L6.8 3.4 L3.4 6.8 L0 3.4 Z" fill="#b4b4b4"/></svg>
<svg style="left:699.2px;top:505.8px" width="6.8" height="6.8" viewBox="0 0 6.8 6.8"><path d="M3.4 0 L6.8 3.4 L3.4 6.8 L0 3.4 Z" fill="#b4b4b4"/></svg>
<div class="a" style="left:605px;top:517.7px;width:405.4px;height:12.799999999999955px;background:#2b2b2b;"></div>
<div class="a" style="left:610.4px;top:518.2px;width:400.0px;height:12.799999999999955px;background:#545894;"></div>
<div class="a" style="left:702px;top:385px;width:1px;height:145.5px;background:#2080dc;"></div>
<svg style="left:698.2px;top:377px" width="9.6" height="9.4" viewBox="0 0 9.6 9.4"><path d="M0 0 H9.6 V4 L4.8 9.4 L0 4 Z" fill="#1e90ff"/><path d="M3 3 H6.6 L4.8 6.6 Z" fill="#1a4a80"/></svg>
<svg style="left:82px;top:414px" width="199" height="21" viewBox="0 0 199 21"><rect x="2.15" y="2.4" width="194.1" height="16.4" fill="none" stroke="#ff0000" stroke-width="4.3"/></svg>
<svg style="left:689px;top:410px" width="28" height="29" viewBox="0 0 28 29"><rect x="2.5" y="2.9" width="23" height="23.5" fill="none" stroke="#ff0000" stroke-width="4.85"/></svg>
<div class="a" style="left:1010.4px;top:363px;width:11.6px;height:180px;background:#282828;"></div>
<svg style="left:1012.9px;top:389.7px" width="8.2" height="10" viewBox="0 0 8.2 10"><path d="M0 0 H8.2 V6 L4.1 10 L0 6 Z" fill="#c4c4c4"/></svg>
<svg style="left:1011px;top:405.4px" width="10.4" height="8.6" viewBox="0 0 10.4 8.6"><path d="M3.6 0.4 H10.2 V7 H3.6 L0.4 3.8 Z" fill="#c4c4c4"/><circle cx="4.2" cy="5.8" r="2" fill="#282828" stroke="#c4c4c4" stroke-width="0.9"/></svg>
<div class="a" style="left:1010.8px;top:416.6px;width:10.6px;height:78px;background:#2f2f2f;border-radius:5px;"></div>
<div class="a" style="left:605.5px;top:530.5px;width:405px;height:12px;background:#1c1c1c;"></div>
<div class="a" style="left:605.5px;top:530.8px;width:80px;height:11.2px;background:#282828;"></div>
<svg style="left:608.7px;top:535px" width="7.6" height="3.4" viewBox="0 0 7.6 3.4"><path d="M0 3.4 L2.4 0.8 L3.6 2 L5.4 0 L7.6 3.4 Z" fill="#c0c0c0"/></svg>
<div class="a" style="left:628.2px;top:536.6px;width:32.5px;height:1px;background:#4c4c4c;"></div>
<svg style="left:643px;top:533.4px" width="7.2" height="7.2" viewBox="0 0 7.2 7.2"><circle cx="3.6" cy="3.6" r="3" fill="#282828" stroke="#c4c4c4" stroke-width="1.1"/></svg>
<svg style="left:669.5px;top:534.4px" width="12" height="5.4" viewBox="0 0 12 5.4"><path d="M0 5.4 L3 1.6 L4.6 3.4 L7.6 0 L12 5.4 Z" fill="#c8c8c8"/></svg>
<div class="a" style="left:686.4px;top:531px;width:141.4px;height:10.6px;background:#2e2e2e;border-radius:5.3px;"></div>
<div class="a" style="left:1023px;top:338px;width:1px;height:206px;background:#161616;"></div>
<svg style="left:0px;top:340px" width="1024" height="204" viewBox="0 0 1024 204"><rect x="0" y="0.7" width="1023.1" height="1.4" fill="#1b6ebc"/><rect x="0" y="0.7" width="1.2" height="203.3" fill="#1b6ebc"/><rect x="1021.9" y="0.7" width="1.2" height="203.3" fill="#1b6ebc"/><rect x="0" y="202.5" width="1023.1" height="1.5" fill="#1b6ebc"/></svg>
</body></html>
